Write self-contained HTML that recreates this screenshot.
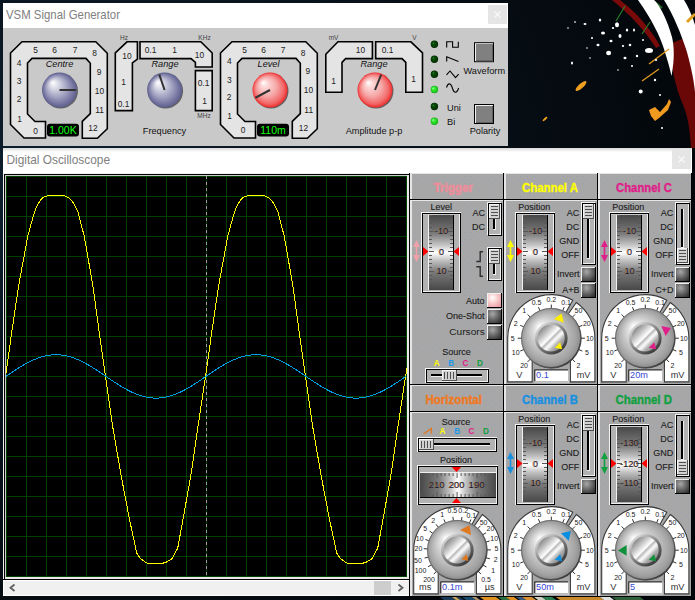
<!DOCTYPE html>
<html><head><meta charset="utf-8"><style>
html,body{margin:0;padding:0;background:#05090e;overflow:hidden}
svg{display:block;font-family:"Liberation Sans", sans-serif}
</style></head><body>
<svg width="695" height="600" viewBox="0 0 695 600">
<defs><radialGradient id="bgg" cx="0.1" cy="0.3" r="0.9">
<stop offset="0" stop-color="#0e2030"/><stop offset="0.5" stop-color="#08121b"/><stop offset="1" stop-color="#03070b"/></radialGradient><radialGradient id="kblue" cx="0.5" cy="0.5" r="0.5" fx="0.3" fy="0.28">
<stop offset="0" stop-color="#ffffff"/><stop offset="0.2" stop-color="#e2e2ec"/><stop offset="0.55" stop-color="#a9a9c6"/><stop offset="0.85" stop-color="#7676a2"/><stop offset="1" stop-color="#5e5e8c"/></radialGradient>
<radialGradient id="kred" cx="0.5" cy="0.5" r="0.5" fx="0.3" fy="0.28">
<stop offset="0" stop-color="#ffffff"/><stop offset="0.22" stop-color="#fcd4d4"/><stop offset="0.55" stop-color="#f6a8a8"/><stop offset="0.85" stop-color="#f26868"/><stop offset="1" stop-color="#ee2a2a"/></radialGradient><radialGradient id="ledoff" cx="0.5" cy="0.5" r="0.5" fx="0.3" fy="0.3"><stop offset="0" stop-color="#50e050"/><stop offset="0.22" stop-color="#0c500c"/><stop offset="0.8" stop-color="#033a03"/><stop offset="1" stop-color="#012001"/></radialGradient>
<radialGradient id="ledon" cx="0.5" cy="0.5" r="0.5" fx="0.3" fy="0.3"><stop offset="0" stop-color="#d0ffd0"/><stop offset="0.3" stop-color="#40f040"/><stop offset="0.85" stop-color="#18c818"/><stop offset="1" stop-color="#10a010"/></radialGradient><linearGradient id="tshadow" x1="0" y1="0" x2="0" y2="1"><stop offset="0" stop-color="#d8d8d8"/><stop offset="1" stop-color="#ffffff"/></linearGradient><clipPath id="scr"><rect x="6" y="176" width="401" height="401"/></clipPath><pattern id="tex" width="7" height="7" patternUnits="userSpaceOnUse">
<rect width="7" height="7" fill="#a7a7a7"/><rect x="2" y="1" width="1" height="1" fill="#98a2b0"/><rect x="5" y="4" width="1" height="1" fill="#9aa4b2"/><rect x="0" y="5" width="1" height="1" fill="#a0a8b4"/></pattern><linearGradient id="cylv" x1="0" y1="0" x2="0" y2="1">
<stop offset="0" stop-color="#484848"/><stop offset="0.25" stop-color="#7c7c7c"/><stop offset="0.4" stop-color="#c4c4c4"/><stop offset="0.5" stop-color="#ffffff"/><stop offset="0.6" stop-color="#c4c4c4"/><stop offset="0.75" stop-color="#7c7c7c"/><stop offset="1" stop-color="#484848"/></linearGradient>
<linearGradient id="cylh" x1="0" y1="0" x2="1" y2="0">
<stop offset="0" stop-color="#484848"/><stop offset="0.25" stop-color="#7c7c7c"/><stop offset="0.4" stop-color="#c4c4c4"/><stop offset="0.5" stop-color="#ffffff"/><stop offset="0.6" stop-color="#c4c4c4"/><stop offset="0.75" stop-color="#7c7c7c"/><stop offset="1" stop-color="#484848"/></linearGradient>
<radialGradient id="btnd" cx="0.35" cy="0.3" r="0.85"><stop offset="0" stop-color="#a8a8a8"/><stop offset="0.5" stop-color="#6a6a6a"/><stop offset="1" stop-color="#303030"/></radialGradient>
<radialGradient id="btnp" cx="0.35" cy="0.3" r="0.8"><stop offset="0" stop-color="#ffffff"/><stop offset="0.45" stop-color="#fad0d0"/><stop offset="1" stop-color="#e8a0a8"/></radialGradient><radialGradient id="knob" cx="0.5" cy="0.5" r="0.5" fx="0.3" fy="0.3">
<stop offset="0" stop-color="#ffffff"/><stop offset="0.3" stop-color="#dedede"/><stop offset="0.7" stop-color="#b8b8b8"/><stop offset="0.9" stop-color="#a2a2a2"/><stop offset="1" stop-color="#8e8e8e"/></radialGradient>
<linearGradient id="rim" x1="0.15" y1="0.1" x2="0.85" y2="0.9"><stop offset="0" stop-color="#9a9a9a"/><stop offset="0.55" stop-color="#707070"/><stop offset="1" stop-color="#303030"/></linearGradient>
<linearGradient id="ring" x1="0.2" y1="0.15" x2="0.8" y2="0.85"><stop offset="0" stop-color="#d0d0d0"/><stop offset="0.45" stop-color="#8a8a8a"/><stop offset="1" stop-color="#404040"/></linearGradient>
<linearGradient id="cap" x1="0.15" y1="0.15" x2="0.85" y2="0.85">
<stop offset="0" stop-color="#8c8c8c"/><stop offset="0.2" stop-color="#bcbcbc"/><stop offset="0.4" stop-color="#f0f0f0"/><stop offset="0.46" stop-color="#ffffff"/><stop offset="0.53" stop-color="#b8b8b8"/><stop offset="0.6" stop-color="#e8e8e8"/><stop offset="0.66" stop-color="#fafafa"/><stop offset="0.82" stop-color="#b0b0b0"/><stop offset="1" stop-color="#8a8a8a"/></linearGradient></defs>
<rect x="0" y="0" width="695" height="600" fill="url(#bgg)"/>
<g>
<path d="M612,0 L620,0 C636,12 650,28 660,46 L656,48 C646,32 630,14 612,0 Z" fill="#7a0a0a"/>
<path d="M669,44 L690,36 L695,40 L695,148 L691,148 C690,128 687,112 681,100 C676,88 671,66 669,44 Z" fill="#6a0808"/>
<path d="M616,21 L625,6" stroke="#2a7a2a" stroke-width="1.2"/><path d="M642,34 L650,22" stroke="#2a7a2a" stroke-width="1.2"/><path d="M655,2 L662,8" stroke="#2a6a2a" stroke-width="2"/>
<path d="M638,0 L654,0 C660,5 668,22 672,37 C674,46 675,58 671.5,76 C669,64 666,56 664,49 C660,36 652,20 638,0 Z" fill="#ffffff"/>
<path d="M664,0 L684,0 C689,8 693,18 695,25 L695,92 C694,80 690,62 686,49 C681,34 674,16 664,0 Z" fill="#ffffff"/>
<path d="M642,81 L659,69" stroke="#e09a20" stroke-width="1.3"/><path d="M649,64 L669,49" stroke="#e09a20" stroke-width="1.3"/><path d="M687,22 L695,14" stroke="#e0a020" stroke-width="3"/>
<ellipse cx="581" cy="86" rx="7" ry="2.3" transform="rotate(-42 581 86)" fill="#f0a020"/>
<ellipse cx="545" cy="119" rx="3" ry="1.1" transform="rotate(-40 545 119)" fill="#f0a020"/>
<path d="M649,110 L655,107 L660,112 L667,104 L669,99 L671,102 L668,110 L659,118 L655,121 L651,116 Z" fill="#f09a20"/>
<ellipse cx="649" cy="50.6" rx="4" ry="2.5" fill="#fff"/><ellipse cx="608.6" cy="53" rx="2.5" ry="2.2" fill="#fff"/><ellipse cx="617" cy="24.7" rx="2" ry="2.5" fill="#fff"/><ellipse cx="640.7" cy="91.4" rx="2" ry="2" fill="#fff"/><ellipse cx="603" cy="33" rx="2" ry="1.5" fill="#fff"/><ellipse cx="611" cy="41" rx="1.5" ry="1.2" fill="#fff"/><ellipse cx="620" cy="36" rx="1.5" ry="2" fill="#fff"/><ellipse cx="627" cy="30" rx="1.2" ry="1.5" fill="#fff"/><ellipse cx="630" cy="45" rx="1.3" ry="1.2" fill="#fff"/><ellipse cx="598" cy="45" rx="1.5" ry="1.2" fill="#fff"/><ellipse cx="613" cy="28" rx="1.2" ry="1" fill="#fff"/><ellipse cx="634" cy="30" rx="1" ry="1.5" fill="#fff"/><ellipse cx="623" cy="46" rx="1.2" ry="1" fill="#fff"/><ellipse cx="637" cy="56" rx="1.2" ry="1.2" fill="#fff"/><ellipse cx="625" cy="58" rx="1.5" ry="1.3" fill="#fff"/><ellipse cx="600" cy="20" rx="1.2" ry="1.5" fill="#fff"/><ellipse cx="585" cy="24" rx="1.5" ry="1" fill="#fff"/><ellipse cx="575" cy="22" rx="1" ry="0.8" fill="#fff"/><ellipse cx="568" cy="28" rx="0.8" ry="0.7" fill="#fff"/><ellipse cx="592" cy="38" rx="1" ry="1" fill="#fff"/><ellipse cx="587" cy="48" rx="0.8" ry="0.8" fill="#fff"/><ellipse cx="572" cy="63" rx="1" ry="1.5" fill="#fff"/><ellipse cx="632" cy="66" rx="1" ry="1" fill="#fff"/><ellipse cx="655" cy="80" rx="1.2" ry="1.2" fill="#fff"/><ellipse cx="660" cy="95" rx="1" ry="1" fill="#fff"/><ellipse cx="618" cy="70" rx="0.8" ry="0.8" fill="#fff"/><ellipse cx="590" cy="58" rx="0.8" ry="0.8" fill="#fff"/><ellipse cx="643" cy="40" rx="1" ry="1" fill="#fff"/><ellipse cx="656" cy="60" rx="1.2" ry="1" fill="#fff"/><ellipse cx="662" cy="128" rx="1" ry="1" fill="#fff"/>
</g>
<path d="M440,597 L460,597 L464,600 L444,600 Z" fill="#1a3a58"/>
<path d="M452,597 L456,597 L460,600 L456,600 Z" fill="#c8a050"/>
<path d="M462,597 L476,597 L480,600 L466,600 Z" fill="#1a4868"/>
<path d="M472,597 L476,597 L480,600 L476,600 Z" fill="#b09060"/>
<path d="M480,597 L496,597 L500,600 L484,600 Z" fill="#e09020"/>
<path d="M498,597 L506,597 L510,600 L502,600 Z" fill="#2a7040"/>
<path d="M506,597 L514,597 L518,600 L510,600 Z" fill="#e09020"/>
<path d="M516,597 L522,597 L526,600 L520,600 Z" fill="#3a5a80"/>
<path d="M522,597 L532,597 L536,600 L526,600 Z" fill="#d89030"/>
<path d="M534,597 L542,597 L546,600 L538,600 Z" fill="#d0d0c0"/>
<path d="M542,597 L552,597 L556,600 L546,600 Z" fill="#2a8050"/>
<path d="M556,597 L600,597 L604,600 L560,600 Z" fill="#c88a28"/>
<path d="M600,597 L610,597 L614,600 L604,600 Z" fill="#e0e0e0"/>
<path d="M612,597 L640,597 L644,600 L616,600 Z" fill="#30603a"/>
<rect x="3" y="3" width="505" height="25" fill="#ffffff"/>
<rect x="3" y="28" width="505" height="118" fill="#c9c9c9"/>
<text x="6" y="19" font-size="12.2" fill="#808080" textLength="114" lengthAdjust="spacingAndGlyphs">VSM Signal Generator</text>
<rect x="488" y="5" width="19" height="19" fill="#e5e5e5"/>
<path d="M494.5,11.5 L500.5,17.5 M500.5,11.5 L494.5,17.5" stroke="#f8f8f8" stroke-width="1.2"/>
<path d="M45.5,138.0 L24.0,138.0 L10.5,124.5 L10.5,53.0 L22.0,41.7 L95.8,41.7 L107.3,53.3 L107.3,128.7 L97.4,138.3 L82.3,138.3 L82.3,121.4 L90.3,113.6 L90.3,63.3 L86.0,58.4 L32.0,58.4 L27.5,63.0 L27.5,114.0 L35.0,121.5 L45.5,121.5 Z" fill="#e4e4e4" stroke="#000" stroke-width="1.6" stroke-linejoin="miter"/>
<path d="M255.5,138.0 L234.0,138.0 L220.5,124.5 L220.5,53.0 L232.0,41.7 L305.8,41.7 L317.3,53.3 L317.3,128.7 L307.4,138.3 L292.3,138.3 L292.3,121.4 L300.3,113.6 L300.3,63.3 L296.0,58.4 L242.0,58.4 L237.5,63.0 L237.5,114.0 L245.0,121.5 L255.5,121.5 Z" fill="#e4e4e4" stroke="#000" stroke-width="1.6" stroke-linejoin="miter"/>
<path d="M127,41.8 L137.4,41.8 L137.4,59 L132.4,63 L132.4,110.6 L115.3,110.6 L115.3,52.9 Z" fill="#e4e4e4" stroke="#000" stroke-width="1.6" stroke-linejoin="miter"/>
<path d="M140,41.8 L200.8,41.8 L212.2,53 L212.2,67 L195.4,67 L195.4,62.4 L191,58.6 L140,58.6 Z" fill="#e4e4e4" stroke="#000" stroke-width="1.6" stroke-linejoin="miter"/>
<path d="M195.4,70.6 L212.2,70.6 L212.2,110.6 L195.4,110.6 Z" fill="#e4e4e4" stroke="#000" stroke-width="1.6" stroke-linejoin="miter"/>
<path d="M338,41.8 L372.4,41.8 L372.4,58.6 L345.6,58.6 L342,62.4 L342,92.2 L325.8,92.2 L325.8,54.3 Z" fill="#e4e4e4" stroke="#000" stroke-width="1.6" stroke-linejoin="miter"/>
<path d="M375.7,41.8 L410.9,41.8 L422.5,52.9 L422.5,92.2 L405.8,92.2 L405.8,62.4 L402,58.6 L375.7,58.6 Z" fill="#e4e4e4" stroke="#000" stroke-width="1.6" stroke-linejoin="miter"/>
<text x="35.5" y="52.5144" font-size="8.4" fill="#222" text-anchor="middle">5</text>
<text x="244.5" y="52.5144" font-size="8.4" fill="#222" text-anchor="middle">5</text>
<text x="54.5" y="52.8144" font-size="8.4" fill="#222" text-anchor="middle">6</text>
<text x="263.5" y="52.8144" font-size="8.4" fill="#222" text-anchor="middle">6</text>
<text x="75" y="52.8144" font-size="8.4" fill="#222" text-anchor="middle">7</text>
<text x="283.2" y="52.8144" font-size="8.4" fill="#222" text-anchor="middle">7</text>
<text x="94.5" y="56.0144" font-size="8.4" fill="#222" text-anchor="middle">8</text>
<text x="303.0" y="55.5144" font-size="8.4" fill="#222" text-anchor="middle">8</text>
<text x="99" y="75.0144" font-size="8.4" fill="#222" text-anchor="middle">9</text>
<text x="307.8" y="73.5144" font-size="8.4" fill="#222" text-anchor="middle">9</text>
<text x="99.5" y="94.0144" font-size="8.4" fill="#222" text-anchor="middle">10</text>
<text x="308.4" y="92.5144" font-size="8.4" fill="#222" text-anchor="middle">10</text>
<text x="99.5" y="113.0144" font-size="8.4" fill="#222" text-anchor="middle">11</text>
<text x="308.7" y="112.5144" font-size="8.4" fill="#222" text-anchor="middle">11</text>
<text x="93" y="130.5144" font-size="8.4" fill="#222" text-anchor="middle">12</text>
<text x="303.4" y="131.0144" font-size="8.4" fill="#222" text-anchor="middle">12</text>
<text x="19" y="66.0144" font-size="8.4" fill="#222" text-anchor="middle">4</text>
<text x="229.3" y="64.0144" font-size="8.4" fill="#222" text-anchor="middle">4</text>
<text x="19" y="84.0144" font-size="8.4" fill="#222" text-anchor="middle">3</text>
<text x="229.3" y="82.5144" font-size="8.4" fill="#222" text-anchor="middle">3</text>
<text x="19" y="101.5144" font-size="8.4" fill="#222" text-anchor="middle">2</text>
<text x="229" y="100.31439999999999" font-size="8.4" fill="#222" text-anchor="middle">2</text>
<text x="19.5" y="122.0144" font-size="8.4" fill="#222" text-anchor="middle">1</text>
<text x="229.5" y="119.0144" font-size="8.4" fill="#222" text-anchor="middle">1</text>
<text x="35.5" y="134.0144" font-size="8.4" fill="#222" text-anchor="middle">0</text>
<text x="243.2" y="133.4144" font-size="8.4" fill="#222" text-anchor="middle">0</text>
<text x="127" y="59.0144" font-size="8.4" fill="#222" text-anchor="middle">10</text>
<text x="123.5" y="85.0144" font-size="8.4" fill="#222" text-anchor="middle">1</text>
<text x="123.5" y="107.0144" font-size="8.4" fill="#222" text-anchor="middle">0.1</text>
<text x="150.5" y="53.0144" font-size="8.4" fill="#222" text-anchor="middle">0.1</text>
<text x="174.5" y="53.0144" font-size="8.4" fill="#222" text-anchor="middle">1</text>
<text x="199.5" y="58.0144" font-size="8.4" fill="#222" text-anchor="middle">10</text>
<text x="203.5" y="86.0144" font-size="8.4" fill="#222" text-anchor="middle">0.1</text>
<text x="204.5" y="104.0144" font-size="8.4" fill="#222" text-anchor="middle">1</text>
<text x="124" y="39.7" font-size="6.5" fill="#444" text-anchor="middle">Hz</text>
<text x="204.5" y="39.9" font-size="6.5" fill="#444" text-anchor="middle">KHz</text>
<text x="204" y="117.5" font-size="6.5" fill="#444" text-anchor="middle">MHz</text>
<text x="360.5" y="53.0144" font-size="8.4" fill="#222" text-anchor="middle">10</text>
<text x="333.5" y="84.0144" font-size="8.4" fill="#222" text-anchor="middle">1</text>
<text x="387.5" y="53.0144" font-size="8.4" fill="#222" text-anchor="middle">0.1</text>
<text x="413.5" y="82.0144" font-size="8.4" fill="#222" text-anchor="middle">1</text>
<text x="333.5" y="40" font-size="6.5" fill="#444" text-anchor="middle">mV</text>
<text x="414.3" y="40.3" font-size="6.5" fill="#444" text-anchor="middle">V</text>
<text x="59.5" y="67.3" font-size="9.2" fill="#111" text-anchor="middle" font-style="italic">Centre</text>
<text x="165" y="67.3" font-size="9.2" fill="#111" text-anchor="middle" font-style="italic">Range</text>
<text x="268.5" y="67.3" font-size="9.2" fill="#111" text-anchor="middle" font-style="italic">Level</text>
<text x="374" y="67.3" font-size="9.2" fill="#111" text-anchor="middle" font-style="italic">Range</text>
<text x="164.5" y="134" font-size="9.2" fill="#111" text-anchor="middle">Frequency</text>
<text x="374" y="134" font-size="9.2" fill="#111" text-anchor="middle">Amplitude p-p</text>
<circle cx="60.5" cy="91" r="17.5" fill="#404040" opacity="0.75"/>
<circle cx="59.5" cy="90" r="17.5" fill="url(#kblue)"/>
<line x1="59.5" y1="90" x2="76.00" y2="90.00" stroke="#333" stroke-width="2"/>
<circle cx="165.6" cy="91" r="17.5" fill="#404040" opacity="0.75"/>
<circle cx="164.6" cy="90" r="17.5" fill="url(#kblue)"/>
<line x1="164.6" y1="90" x2="159.23" y2="74.40" stroke="#333" stroke-width="2"/>
<circle cx="271" cy="91" r="17.5" fill="#404040" opacity="0.75"/>
<circle cx="270" cy="90" r="17.5" fill="url(#kred)"/>
<line x1="270" y1="90" x2="255.43" y2="97.75" stroke="#333" stroke-width="2"/>
<circle cx="376" cy="91" r="17.5" fill="#404040" opacity="0.75"/>
<circle cx="375" cy="90" r="17.5" fill="url(#kred)"/>
<line x1="375" y1="90" x2="381.18" y2="74.70" stroke="#333" stroke-width="2"/>
<rect x="47" y="123.7" width="32" height="12.8" rx="3" fill="#000"/>
<text x="63.0" y="134.2" font-size="10.5" fill="#10ff10" text-anchor="middle">1.00K</text>
<rect x="257" y="123.7" width="32" height="12.8" rx="3" fill="#000"/>
<text x="273.0" y="134.2" font-size="10.5" fill="#10ff10" text-anchor="middle">110m</text>
<circle cx="434.4" cy="44.3" r="3.7" fill="url(#ledoff)"/>
<circle cx="434.4" cy="59.2" r="3.7" fill="url(#ledoff)"/>
<circle cx="434.4" cy="74.2" r="3.7" fill="url(#ledoff)"/>
<circle cx="434.4" cy="89.5" r="3.7" fill="url(#ledon)"/>
<circle cx="434.4" cy="106.5" r="3.7" fill="url(#ledoff)"/>
<circle cx="434.4" cy="121.2" r="3.7" fill="url(#ledon)"/>
<path d="M446.7,47.5 L446.7,41.7 L452.6,41.7 L452.6,47.3 L458.3,47.3 L458.3,41.7" fill="none" stroke="#000" stroke-width="1.1"/>
<path d="M446.7,61.5 L446.7,56.7 L458.5,61.5" fill="none" stroke="#000" stroke-width="1.1"/>
<path d="M446.5,74.8 L450,71 L455.5,77.6 L458.6,74.2" fill="none" stroke="#000" stroke-width="1.1"/>
<path d="M446.5,87.5 C448,82.5 451,82.5 452.5,88.5 C454,93.5 457,93.5 458.6,88" fill="none" stroke="#000" stroke-width="1.1"/>
<text x="447" y="110.5" font-size="9.2" fill="#111">Uni</text>
<text x="447" y="124.5" font-size="9.2" fill="#111">Bi</text>
<rect x="474" y="42.2" width="20" height="20" fill="#000"/>
<rect x="475" y="43.2" width="18" height="18" fill="#f0f0f0"/>
<rect x="476" y="44.2" width="17" height="17" fill="#606060"/>
<rect x="476" y="44.2" width="16" height="16" fill="#808080"/>
<rect x="474" y="104" width="20" height="20" fill="#000"/>
<rect x="475" y="105" width="18" height="18" fill="#f0f0f0"/>
<rect x="476" y="106" width="17" height="17" fill="#606060"/>
<rect x="476" y="106" width="16" height="16" fill="#808080"/>
<text x="484.3" y="74" font-size="9.2" fill="#111" text-anchor="middle">Waveform</text>
<text x="485" y="133.8" font-size="9.2" fill="#111" text-anchor="middle">Polarity</text>
<rect x="3" y="148" width="689" height="25" fill="#ffffff"/>
<rect x="3" y="148" width="689" height="4" fill="url(#tshadow)"/>
<text x="6.5" y="163.8" font-size="12.2" fill="#808080" textLength="103.5" lengthAdjust="spacingAndGlyphs">Digital Oscilloscope</text>
<rect x="672" y="150" width="19" height="19" fill="#e5e5e5"/>
<path d="M678.5,156.5 L684.5,162.5 M684.5,156.5 L678.5,162.5" stroke="#f8f8f8" stroke-width="1.2"/>
<rect x="3" y="173" width="408" height="423" fill="#f0f0f0"/>
<rect x="4" y="174" width="406" height="406" fill="#000"/>
<rect x="5" y="175" width="404" height="404" fill="#c8c8c8"/>
<rect x="6" y="176" width="401" height="401" fill="#000"/>
<rect x="407" y="175" width="2" height="404" fill="#e8e8e8"/>
<rect x="5" y="577" width="404" height="2" fill="#e8e8e8"/>
<rect x="6" y="176" width="1" height="401" fill="#004000"/><rect x="6" y="176" width="401" height="1" fill="#004000"/><rect x="26" y="176" width="1" height="401" fill="#004000"/><rect x="6" y="196" width="401" height="1" fill="#004000"/><rect x="46" y="176" width="1" height="401" fill="#004000"/><rect x="6" y="216" width="401" height="1" fill="#004000"/><rect x="66" y="176" width="1" height="401" fill="#004000"/><rect x="6" y="236" width="401" height="1" fill="#004000"/><rect x="86" y="176" width="1" height="401" fill="#004000"/><rect x="6" y="256" width="401" height="1" fill="#004000"/><rect x="106" y="176" width="1" height="401" fill="#004000"/><rect x="6" y="276" width="401" height="1" fill="#004000"/><rect x="126" y="176" width="1" height="401" fill="#004000"/><rect x="6" y="296" width="401" height="1" fill="#004000"/><rect x="146" y="176" width="1" height="401" fill="#004000"/><rect x="6" y="316" width="401" height="1" fill="#004000"/><rect x="166" y="176" width="1" height="401" fill="#004000"/><rect x="6" y="336" width="401" height="1" fill="#004000"/><rect x="186" y="176" width="1" height="401" fill="#004000"/><rect x="6" y="356" width="401" height="1" fill="#004000"/><rect x="206" y="176" width="1" height="401" fill="#004000"/><rect x="6" y="376" width="401" height="1" fill="#004000"/><rect x="226" y="176" width="1" height="401" fill="#004000"/><rect x="6" y="396" width="401" height="1" fill="#004000"/><rect x="246" y="176" width="1" height="401" fill="#004000"/><rect x="6" y="416" width="401" height="1" fill="#004000"/><rect x="266" y="176" width="1" height="401" fill="#004000"/><rect x="6" y="436" width="401" height="1" fill="#004000"/><rect x="286" y="176" width="1" height="401" fill="#004000"/><rect x="6" y="456" width="401" height="1" fill="#004000"/><rect x="306" y="176" width="1" height="401" fill="#004000"/><rect x="6" y="476" width="401" height="1" fill="#004000"/><rect x="326" y="176" width="1" height="401" fill="#004000"/><rect x="6" y="496" width="401" height="1" fill="#004000"/><rect x="346" y="176" width="1" height="401" fill="#004000"/><rect x="6" y="516" width="401" height="1" fill="#004000"/><rect x="366" y="176" width="1" height="401" fill="#004000"/><rect x="6" y="536" width="401" height="1" fill="#004000"/><rect x="386" y="176" width="1" height="401" fill="#004000"/><rect x="6" y="556" width="401" height="1" fill="#004000"/><rect x="406" y="176" width="1" height="401" fill="#004000"/><rect x="6" y="576" width="401" height="1" fill="#004000"/>
<rect x="206" y="176" width="1" height="3" fill="#a0a0a0"/><rect x="206" y="182" width="1" height="3" fill="#a0a0a0"/><rect x="206" y="188" width="1" height="3" fill="#a0a0a0"/><rect x="206" y="194" width="1" height="3" fill="#a0a0a0"/><rect x="206" y="200" width="1" height="3" fill="#a0a0a0"/><rect x="206" y="206" width="1" height="3" fill="#a0a0a0"/><rect x="206" y="212" width="1" height="3" fill="#a0a0a0"/><rect x="206" y="218" width="1" height="3" fill="#a0a0a0"/><rect x="206" y="224" width="1" height="3" fill="#a0a0a0"/><rect x="206" y="230" width="1" height="3" fill="#a0a0a0"/><rect x="206" y="236" width="1" height="3" fill="#a0a0a0"/><rect x="206" y="242" width="1" height="3" fill="#a0a0a0"/><rect x="206" y="248" width="1" height="3" fill="#a0a0a0"/><rect x="206" y="254" width="1" height="3" fill="#a0a0a0"/><rect x="206" y="260" width="1" height="3" fill="#a0a0a0"/><rect x="206" y="266" width="1" height="3" fill="#a0a0a0"/><rect x="206" y="272" width="1" height="3" fill="#a0a0a0"/><rect x="206" y="278" width="1" height="3" fill="#a0a0a0"/><rect x="206" y="284" width="1" height="3" fill="#a0a0a0"/><rect x="206" y="290" width="1" height="3" fill="#a0a0a0"/><rect x="206" y="296" width="1" height="3" fill="#a0a0a0"/><rect x="206" y="302" width="1" height="3" fill="#a0a0a0"/><rect x="206" y="308" width="1" height="3" fill="#a0a0a0"/><rect x="206" y="314" width="1" height="3" fill="#a0a0a0"/><rect x="206" y="320" width="1" height="3" fill="#a0a0a0"/><rect x="206" y="326" width="1" height="3" fill="#a0a0a0"/><rect x="206" y="332" width="1" height="3" fill="#a0a0a0"/><rect x="206" y="338" width="1" height="3" fill="#a0a0a0"/><rect x="206" y="344" width="1" height="3" fill="#a0a0a0"/><rect x="206" y="350" width="1" height="3" fill="#a0a0a0"/><rect x="206" y="356" width="1" height="3" fill="#a0a0a0"/><rect x="206" y="362" width="1" height="3" fill="#a0a0a0"/><rect x="206" y="368" width="1" height="3" fill="#a0a0a0"/><rect x="206" y="374" width="1" height="3" fill="#a0a0a0"/><rect x="206" y="380" width="1" height="3" fill="#a0a0a0"/><rect x="206" y="386" width="1" height="3" fill="#a0a0a0"/><rect x="206" y="392" width="1" height="3" fill="#a0a0a0"/><rect x="206" y="398" width="1" height="3" fill="#a0a0a0"/><rect x="206" y="404" width="1" height="3" fill="#a0a0a0"/><rect x="206" y="410" width="1" height="3" fill="#a0a0a0"/><rect x="206" y="416" width="1" height="3" fill="#a0a0a0"/><rect x="206" y="422" width="1" height="3" fill="#a0a0a0"/><rect x="206" y="428" width="1" height="3" fill="#a0a0a0"/><rect x="206" y="434" width="1" height="3" fill="#a0a0a0"/><rect x="206" y="440" width="1" height="3" fill="#a0a0a0"/><rect x="206" y="446" width="1" height="3" fill="#a0a0a0"/><rect x="206" y="452" width="1" height="3" fill="#a0a0a0"/><rect x="206" y="458" width="1" height="3" fill="#a0a0a0"/><rect x="206" y="464" width="1" height="3" fill="#a0a0a0"/><rect x="206" y="470" width="1" height="3" fill="#a0a0a0"/><rect x="206" y="476" width="1" height="3" fill="#a0a0a0"/><rect x="206" y="482" width="1" height="3" fill="#a0a0a0"/><rect x="206" y="488" width="1" height="3" fill="#a0a0a0"/><rect x="206" y="494" width="1" height="3" fill="#a0a0a0"/><rect x="206" y="500" width="1" height="3" fill="#a0a0a0"/><rect x="206" y="506" width="1" height="3" fill="#a0a0a0"/><rect x="206" y="512" width="1" height="3" fill="#a0a0a0"/><rect x="206" y="518" width="1" height="3" fill="#a0a0a0"/><rect x="206" y="524" width="1" height="3" fill="#a0a0a0"/><rect x="206" y="530" width="1" height="3" fill="#a0a0a0"/><rect x="206" y="536" width="1" height="3" fill="#a0a0a0"/><rect x="206" y="542" width="1" height="3" fill="#a0a0a0"/><rect x="206" y="548" width="1" height="3" fill="#a0a0a0"/><rect x="206" y="554" width="1" height="3" fill="#a0a0a0"/><rect x="206" y="560" width="1" height="3" fill="#a0a0a0"/><rect x="206" y="566" width="1" height="3" fill="#a0a0a0"/><rect x="206" y="572" width="1" height="3" fill="#a0a0a0"/>
<polyline points="5.50,376.50 12.00,330.50 18.50,286.50 27.70,236.50 32.70,218.20 36.80,206.00 40.50,200.00 44.00,196.80 48.00,195.80 64.30,195.80 68.50,197.50 72.50,201.50 77.70,211.00 84.30,236.50 92.70,284.50 99.00,330.50 105.50,376.50 113.00,428.50 121.30,476.50 129.50,519.50 136.80,553.20 140.20,558.20 146.00,562.80 150.20,563.80 159.30,563.80 165.20,562.70 171.80,559.00 177.70,548.20 183.50,516.50 190.70,476.50 198.00,426.50 205.50,376.50 212.00,330.50 218.50,286.50 227.70,236.50 232.70,218.20 236.80,206.00 240.50,200.00 244.00,196.80 248.00,195.80 264.30,195.80 268.50,197.50 272.50,201.50 277.70,211.00 284.30,236.50 292.70,284.50 299.00,330.50 305.50,376.50 313.00,428.50 321.30,476.50 329.50,519.50 336.80,553.20 340.20,558.20 346.00,562.80 350.20,563.80 359.30,563.80 365.20,562.70 371.80,559.00 377.70,548.20 383.50,516.50 390.70,476.50 398.00,426.50 405.50,376.50 412.00,340.00" fill="none" stroke="#ffff00" stroke-width="1" shape-rendering="crispEdges" clip-path="url(#scr)"/>
<polyline points="6.00,376.40 8.00,375.04 10.00,373.68 12.00,372.33 14.00,371.00 16.00,369.69 18.00,368.41 20.00,367.16 22.00,365.95 24.00,364.77 26.00,363.65 28.00,362.57 30.00,361.55 32.00,360.58 34.00,359.68 36.00,358.84 38.00,358.08 40.00,357.38 42.00,356.77 44.00,356.22 46.00,355.76 48.00,355.38 50.00,355.08 52.00,354.87 54.00,354.74 56.00,354.70 58.00,354.74 60.00,354.87 62.00,355.08 64.00,355.38 66.00,355.76 68.00,356.22 70.00,356.77 72.00,357.38 74.00,358.08 76.00,358.84 78.00,359.68 80.00,360.58 82.00,361.55 84.00,362.57 86.00,363.65 88.00,364.77 90.00,365.95 92.00,367.16 94.00,368.41 96.00,369.69 98.00,371.00 100.00,372.33 102.00,373.68 104.00,375.04 106.00,376.40 108.00,377.76 110.00,379.12 112.00,380.47 114.00,381.80 116.00,383.11 118.00,384.39 120.00,385.64 122.00,386.85 124.00,388.03 126.00,389.15 128.00,390.23 130.00,391.25 132.00,392.22 134.00,393.12 136.00,393.96 138.00,394.72 140.00,395.42 142.00,396.03 144.00,396.58 146.00,397.04 148.00,397.42 150.00,397.72 152.00,397.93 154.00,398.06 156.00,398.10 158.00,398.06 160.00,397.93 162.00,397.72 164.00,397.42 166.00,397.04 168.00,396.58 170.00,396.03 172.00,395.42 174.00,394.72 176.00,393.96 178.00,393.12 180.00,392.22 182.00,391.25 184.00,390.23 186.00,389.15 188.00,388.03 190.00,386.85 192.00,385.64 194.00,384.39 196.00,383.11 198.00,381.80 200.00,380.47 202.00,379.12 204.00,377.76 206.00,376.40 208.00,375.04 210.00,373.68 212.00,372.33 214.00,371.00 216.00,369.69 218.00,368.41 220.00,367.16 222.00,365.95 224.00,364.77 226.00,363.65 228.00,362.57 230.00,361.55 232.00,360.58 234.00,359.68 236.00,358.84 238.00,358.08 240.00,357.38 242.00,356.77 244.00,356.22 246.00,355.76 248.00,355.38 250.00,355.08 252.00,354.87 254.00,354.74 256.00,354.70 258.00,354.74 260.00,354.87 262.00,355.08 264.00,355.38 266.00,355.76 268.00,356.22 270.00,356.77 272.00,357.38 274.00,358.08 276.00,358.84 278.00,359.68 280.00,360.58 282.00,361.55 284.00,362.57 286.00,363.65 288.00,364.77 290.00,365.95 292.00,367.16 294.00,368.41 296.00,369.69 298.00,371.00 300.00,372.33 302.00,373.68 304.00,375.04 306.00,376.40 308.00,377.76 310.00,379.12 312.00,380.47 314.00,381.80 316.00,383.11 318.00,384.39 320.00,385.64 322.00,386.85 324.00,388.03 326.00,389.15 328.00,390.23 330.00,391.25 332.00,392.22 334.00,393.12 336.00,393.96 338.00,394.72 340.00,395.42 342.00,396.03 344.00,396.58 346.00,397.04 348.00,397.42 350.00,397.72 352.00,397.93 354.00,398.06 356.00,398.10 358.00,398.06 360.00,397.93 362.00,397.72 364.00,397.42 366.00,397.04 368.00,396.58 370.00,396.03 372.00,395.42 374.00,394.72 376.00,393.96 378.00,393.12 380.00,392.22 382.00,391.25 384.00,390.23 386.00,389.15 388.00,388.03 390.00,386.85 392.00,385.64 394.00,384.39 396.00,383.11 398.00,381.80 400.00,380.47 402.00,379.12 404.00,377.76 406.00,376.40" fill="none" stroke="#009ee0" stroke-width="1" shape-rendering="crispEdges" clip-path="url(#scr)"/>
<rect x="3" y="579" width="407" height="1" fill="#000"/>
<rect x="3" y="580" width="407" height="16" fill="#ffffff"/>
<rect x="4" y="581" width="405" height="14" fill="#f0f0f0"/>
<rect x="374" y="581" width="17" height="14" fill="#cdcdcd"/>
<path d="M14.5,584.5 L10.5,587.8 L14.5,591" fill="none" stroke="#606060" stroke-width="1.8"/>
<path d="M398.5,584.5 L402.5,587.8 L398.5,591" fill="none" stroke="#606060" stroke-width="1.8"/>
<rect x="409" y="173" width="283" height="424" fill="#000"/>
<rect x="410" y="173" width="93" height="26" fill="#e6e6e6"/>
<rect x="412" y="174" width="91" height="25" fill="url(#tex)"/>
<rect x="503" y="173" width="1" height="27" fill="#000"/>
<rect x="410" y="199" width="94" height="1" fill="#000"/>
<rect x="410" y="200" width="93" height="184" fill="#e6e6e6"/>
<rect x="412" y="201" width="91" height="183" fill="url(#tex)"/>
<rect x="503" y="200" width="1" height="185" fill="#000"/>
<rect x="410" y="384" width="94" height="1" fill="#000"/>
<rect x="410" y="385" width="93" height="26" fill="#e6e6e6"/>
<rect x="412" y="386" width="91" height="25" fill="url(#tex)"/>
<rect x="503" y="385" width="1" height="27" fill="#000"/>
<rect x="410" y="411" width="94" height="1" fill="#000"/>
<rect x="410" y="412" width="93" height="184" fill="#e6e6e6"/>
<rect x="412" y="413" width="91" height="183" fill="url(#tex)"/>
<rect x="503" y="412" width="1" height="185" fill="#000"/>
<rect x="410" y="596" width="94" height="1" fill="#000"/>
<rect x="504" y="173" width="93" height="26" fill="#e6e6e6"/>
<rect x="506" y="174" width="91" height="25" fill="url(#tex)"/>
<rect x="597" y="173" width="1" height="27" fill="#000"/>
<rect x="504" y="199" width="94" height="1" fill="#000"/>
<rect x="504" y="200" width="93" height="184" fill="#e6e6e6"/>
<rect x="506" y="201" width="91" height="183" fill="url(#tex)"/>
<rect x="597" y="200" width="1" height="185" fill="#000"/>
<rect x="504" y="384" width="94" height="1" fill="#000"/>
<rect x="504" y="385" width="93" height="26" fill="#e6e6e6"/>
<rect x="506" y="386" width="91" height="25" fill="url(#tex)"/>
<rect x="597" y="385" width="1" height="27" fill="#000"/>
<rect x="504" y="411" width="94" height="1" fill="#000"/>
<rect x="504" y="412" width="93" height="184" fill="#e6e6e6"/>
<rect x="506" y="413" width="91" height="183" fill="url(#tex)"/>
<rect x="597" y="412" width="1" height="185" fill="#000"/>
<rect x="504" y="596" width="94" height="1" fill="#000"/>
<rect x="598" y="173" width="93" height="26" fill="#e6e6e6"/>
<rect x="600" y="174" width="91" height="25" fill="url(#tex)"/>
<rect x="691" y="173" width="1" height="27" fill="#000"/>
<rect x="598" y="199" width="94" height="1" fill="#000"/>
<rect x="598" y="200" width="93" height="184" fill="#e6e6e6"/>
<rect x="600" y="201" width="91" height="183" fill="url(#tex)"/>
<rect x="691" y="200" width="1" height="185" fill="#000"/>
<rect x="598" y="384" width="94" height="1" fill="#000"/>
<rect x="598" y="385" width="93" height="26" fill="#e6e6e6"/>
<rect x="600" y="386" width="91" height="25" fill="url(#tex)"/>
<rect x="691" y="385" width="1" height="27" fill="#000"/>
<rect x="598" y="411" width="94" height="1" fill="#000"/>
<rect x="598" y="412" width="93" height="184" fill="#e6e6e6"/>
<rect x="600" y="413" width="91" height="183" fill="url(#tex)"/>
<rect x="691" y="412" width="1" height="185" fill="#000"/>
<rect x="598" y="596" width="94" height="1" fill="#000"/>
<text x="453.2" y="192.4" font-size="12" fill="#f08c9a" text-anchor="middle" font-weight="bold" textLength="39.6" lengthAdjust="spacingAndGlyphs" stroke="#f08c9a" stroke-width="0.35">Trigger</text>
<text x="550" y="191.6" font-size="12" fill="#ffff00" text-anchor="middle" font-weight="bold" textLength="56" lengthAdjust="spacingAndGlyphs" stroke="#ffff00" stroke-width="0.35">Channel A</text>
<text x="644" y="191.6" font-size="12" fill="#e0208a" text-anchor="middle" font-weight="bold" textLength="56" lengthAdjust="spacingAndGlyphs" stroke="#e0208a" stroke-width="0.35">Channel C</text>
<text x="453.7" y="403.9" font-size="12" fill="#f07820" text-anchor="middle" font-weight="bold" textLength="56.5" lengthAdjust="spacingAndGlyphs" stroke="#f07820" stroke-width="0.35">Horizontal</text>
<text x="550" y="403.9" font-size="12" fill="#1890e0" text-anchor="middle" font-weight="bold" textLength="56" lengthAdjust="spacingAndGlyphs" stroke="#1890e0" stroke-width="0.35">Channel B</text>
<text x="643.7" y="404" font-size="12" fill="#10a040" text-anchor="middle" font-weight="bold" textLength="56.5" lengthAdjust="spacingAndGlyphs" stroke="#10a040" stroke-width="0.35">Channel D</text>
<text x="441.3" y="209.7" font-size="9" fill="#1c1c1c" text-anchor="middle" stroke="#1c1c1c" stroke-width="0.12">Level</text>
<rect x="421" y="212" width="40" height="1" fill="#f4f4f4"/>
<rect x="421" y="212" width="1" height="81" fill="#f4f4f4"/>
<rect x="422" y="213" width="39" height="80" fill="#000"/>
<rect x="423" y="214" width="37" height="78" fill="#b2b2b2"/>
<rect x="423" y="214" width="37" height="1" fill="#c8c8c8"/>
<rect x="459" y="214" width="1" height="78" fill="#f0f0f0"/>
<rect x="423" y="291" width="37" height="1" fill="#f0f0f0"/>
<rect x="428" y="215" width="1" height="75" fill="#f0f0f0"/>
<rect x="429" y="215" width="24" height="75" fill="url(#cylv)"/>
<rect x="453" y="215" width="1" height="75" fill="#000"/>
<rect x="429" y="215" width="3" height="1" fill="#585858"/><rect x="450" y="215" width="3" height="1" fill="#585858"/><rect x="429" y="219" width="3" height="1" fill="#585858"/><rect x="450" y="219" width="3" height="1" fill="#585858"/><rect x="429" y="223" width="3" height="1" fill="#585858"/><rect x="450" y="223" width="3" height="1" fill="#585858"/><rect x="429" y="227" width="3" height="1" fill="#585858"/><rect x="450" y="227" width="3" height="1" fill="#585858"/><rect x="429" y="231" width="5" height="1" fill="#585858"/><rect x="448" y="231" width="5" height="1" fill="#585858"/><rect x="429" y="235" width="3" height="1" fill="#585858"/><rect x="450" y="235" width="3" height="1" fill="#585858"/><rect x="429" y="239" width="3" height="1" fill="#585858"/><rect x="450" y="239" width="3" height="1" fill="#585858"/><rect x="429" y="243" width="3" height="1" fill="#585858"/><rect x="450" y="243" width="3" height="1" fill="#585858"/><rect x="429" y="247" width="3" height="1" fill="#585858"/><rect x="450" y="247" width="3" height="1" fill="#585858"/><rect x="429" y="251" width="5" height="1" fill="#585858"/><rect x="448" y="251" width="5" height="1" fill="#585858"/><rect x="429" y="255" width="3" height="1" fill="#585858"/><rect x="450" y="255" width="3" height="1" fill="#585858"/><rect x="429" y="259" width="3" height="1" fill="#585858"/><rect x="450" y="259" width="3" height="1" fill="#585858"/><rect x="429" y="263" width="3" height="1" fill="#585858"/><rect x="450" y="263" width="3" height="1" fill="#585858"/><rect x="429" y="267" width="3" height="1" fill="#585858"/><rect x="450" y="267" width="3" height="1" fill="#585858"/><rect x="429" y="271" width="5" height="1" fill="#585858"/><rect x="448" y="271" width="5" height="1" fill="#585858"/><rect x="429" y="275" width="3" height="1" fill="#585858"/><rect x="450" y="275" width="3" height="1" fill="#585858"/><rect x="429" y="279" width="3" height="1" fill="#585858"/><rect x="450" y="279" width="3" height="1" fill="#585858"/><rect x="429" y="283" width="3" height="1" fill="#585858"/><rect x="450" y="283" width="3" height="1" fill="#585858"/>
<g text-anchor="middle" font-size="9.2"><text x="440.8" y="234" fill="#c07020" opacity="0.7">-10</text><text x="441.5" y="234" fill="#182038">-10</text></g>
<g text-anchor="middle" font-size="9.2"><text x="440.8" y="254.6" fill="#c07020" opacity="0.7">0</text><text x="441.5" y="254.6" fill="#182038">0</text></g>
<g text-anchor="middle" font-size="9.2"><text x="440.8" y="274" fill="#c07020" opacity="0.7">10</text><text x="441.5" y="274" fill="#182038">10</text></g>
<path d="M423,247 L428.5,251.5 L423,256 Z" fill="#ff0000"/>
<path d="M459,247 L453.5,251.5 L459,256 Z" fill="#ff0000"/>
<path d="M413,247 L416.5,240 L420,247 L417.3,247 L417.3,255 L420,255 L416.5,262 L413,255 L415.7,255 L415.7,247 Z" fill="#f0a0a8"/>
<text x="485" y="215.9" font-size="9" fill="#1c1c1c" text-anchor="end" stroke="#1c1c1c" stroke-width="0.12">AC</text>
<text x="485" y="229.5" font-size="9" fill="#1c1c1c" text-anchor="end" stroke="#1c1c1c" stroke-width="0.12">DC</text>
<rect x="487" y="202" width="14" height="1" fill="#f4f4f4"/>
<rect x="487" y="202" width="1" height="33" fill="#f4f4f4"/>
<rect x="488" y="203" width="14" height="33" fill="#000"/>
<rect x="489" y="204" width="12" height="31" fill="#b2b2b2"/>
<rect x="500" y="204" width="1" height="31" fill="#f0f0f0"/>
<rect x="489" y="234" width="12" height="1" fill="#f0f0f0"/>
<rect x="493" y="219" width="2" height="11" fill="#000"/>
<rect x="495" y="219" width="1" height="11" fill="#f0f0f0"/>
<rect x="493" y="229" width="3" height="1" fill="#f0f0f0"/>
<rect x="489" y="204" width="11" height="15" fill="#505050"/>
<rect x="489" y="204" width="10" height="14" fill="#f4f4f4"/>
<rect x="490" y="205" width="9" height="13" fill="#d2d2d2"/>
<rect x="491" y="206" width="7" height="1" fill="#505050"/>
<rect x="491" y="209" width="7" height="1" fill="#505050"/>
<rect x="491" y="212" width="7" height="1" fill="#505050"/>
<rect x="491" y="215" width="7" height="1" fill="#505050"/>
<rect x="487" y="247" width="14" height="1" fill="#f4f4f4"/>
<rect x="487" y="247" width="1" height="33" fill="#f4f4f4"/>
<rect x="488" y="248" width="14" height="33" fill="#000"/>
<rect x="489" y="249" width="12" height="31" fill="#b2b2b2"/>
<rect x="500" y="249" width="1" height="31" fill="#f0f0f0"/>
<rect x="489" y="279" width="12" height="1" fill="#f0f0f0"/>
<rect x="493" y="264" width="2" height="11" fill="#000"/>
<rect x="495" y="264" width="1" height="11" fill="#f0f0f0"/>
<rect x="493" y="274" width="3" height="1" fill="#f0f0f0"/>
<rect x="489" y="249" width="11" height="15" fill="#505050"/>
<rect x="489" y="249" width="10" height="14" fill="#f4f4f4"/>
<rect x="490" y="250" width="9" height="13" fill="#d2d2d2"/>
<rect x="491" y="251" width="7" height="1" fill="#505050"/>
<rect x="491" y="254" width="7" height="1" fill="#505050"/>
<rect x="491" y="257" width="7" height="1" fill="#505050"/>
<rect x="491" y="260" width="7" height="1" fill="#505050"/>
<path d="M476.3,261.5 L480.2,261.5 L480.2,251.8 L483,251.8 M476.3,266.7 L480.2,266.7 L480.2,276.3 L483,276.3" fill="none" stroke="#303030" stroke-width="1.4"/>
<text x="484.5" y="303.8" font-size="9" fill="#1c1c1c" text-anchor="end" stroke="#1c1c1c" stroke-width="0.12">Auto</text>
<text x="484.5" y="318.5" font-size="9" fill="#1c1c1c" text-anchor="end" stroke="#1c1c1c" stroke-width="0.12">One-Shot</text>
<text x="484.8" y="334.6" font-size="9.2" fill="#1c1c1c" text-anchor="end" textLength="35.6" lengthAdjust="spacingAndGlyphs">Cursors</text>
<rect x="487" y="293" width="15" height="15" fill="#000"/>
<rect x="487" y="293" width="14" height="14" fill="#f0f0f0"/>
<rect x="488" y="294" width="13" height="13" fill="url(#btnp)"/>
<rect x="487" y="309" width="15" height="15" fill="#000"/>
<rect x="487" y="309" width="14" height="14" fill="#f0f0f0"/>
<rect x="488" y="310" width="13" height="13" fill="url(#btnd)"/>
<rect x="487" y="325" width="15" height="15" fill="#000"/>
<rect x="487" y="325" width="14" height="14" fill="#f0f0f0"/>
<rect x="488" y="326" width="13" height="13" fill="url(#btnd)"/>
<text x="456.5" y="354.7" font-size="9" fill="#1c1c1c" text-anchor="middle" stroke="#1c1c1c" stroke-width="0.12">Source</text>
<text x="436.8" y="365.5" font-size="8.2" fill="#ffff00" text-anchor="middle" font-weight="bold">A</text>
<text x="451.3" y="365.5" font-size="8.2" fill="#1a98e8" text-anchor="middle" font-weight="bold">B</text>
<text x="465.5" y="365.5" font-size="8.2" fill="#e0208a" text-anchor="middle" font-weight="bold">C</text>
<text x="480" y="365.5" font-size="8.2" fill="#10a040" text-anchor="middle" font-weight="bold">D</text>
<rect x="425" y="368" width="64" height="1" fill="#f4f4f4"/>
<rect x="425" y="368" width="1" height="15" fill="#f4f4f4"/>
<rect x="426" y="369" width="63" height="14" fill="#000"/>
<rect x="427" y="370" width="61" height="12" fill="#b2b2b2"/>
<rect x="427" y="381" width="61" height="1" fill="#f0f0f0"/>
<rect x="487" y="370" width="1" height="12" fill="#f0f0f0"/>
<rect x="431" y="374" width="51" height="2" fill="#000"/>
<rect x="431" y="376" width="51" height="1" fill="#f0f0f0"/>
<rect x="442" y="370" width="15" height="11" fill="#505050"/>
<rect x="442" y="370" width="14" height="10" fill="#f4f4f4"/>
<rect x="443" y="371" width="13" height="9" fill="#d2d2d2"/>
<rect x="444" y="372" width="1" height="7" fill="#505050"/>
<rect x="447" y="372" width="1" height="7" fill="#505050"/>
<rect x="450" y="372" width="1" height="7" fill="#505050"/>
<rect x="453" y="372" width="1" height="7" fill="#505050"/>
<text x="534.2" y="209.5" font-size="9" fill="#1c1c1c" text-anchor="middle" stroke="#1c1c1c" stroke-width="0.12">Position</text>
<rect x="515" y="212" width="40" height="1" fill="#f4f4f4"/>
<rect x="515" y="212" width="1" height="81" fill="#f4f4f4"/>
<rect x="516" y="213" width="39" height="80" fill="#000"/>
<rect x="517" y="214" width="37" height="78" fill="#b2b2b2"/>
<rect x="517" y="214" width="37" height="1" fill="#c8c8c8"/>
<rect x="553" y="214" width="1" height="78" fill="#f0f0f0"/>
<rect x="517" y="291" width="37" height="1" fill="#f0f0f0"/>
<rect x="522" y="215" width="1" height="75" fill="#f0f0f0"/>
<rect x="523" y="215" width="24" height="75" fill="url(#cylv)"/>
<rect x="547" y="215" width="1" height="75" fill="#000"/>
<rect x="523" y="215" width="3" height="1" fill="#585858"/><rect x="544" y="215" width="3" height="1" fill="#585858"/><rect x="523" y="219" width="3" height="1" fill="#585858"/><rect x="544" y="219" width="3" height="1" fill="#585858"/><rect x="523" y="223" width="3" height="1" fill="#585858"/><rect x="544" y="223" width="3" height="1" fill="#585858"/><rect x="523" y="227" width="3" height="1" fill="#585858"/><rect x="544" y="227" width="3" height="1" fill="#585858"/><rect x="523" y="231" width="5" height="1" fill="#585858"/><rect x="542" y="231" width="5" height="1" fill="#585858"/><rect x="523" y="235" width="3" height="1" fill="#585858"/><rect x="544" y="235" width="3" height="1" fill="#585858"/><rect x="523" y="239" width="3" height="1" fill="#585858"/><rect x="544" y="239" width="3" height="1" fill="#585858"/><rect x="523" y="243" width="3" height="1" fill="#585858"/><rect x="544" y="243" width="3" height="1" fill="#585858"/><rect x="523" y="247" width="3" height="1" fill="#585858"/><rect x="544" y="247" width="3" height="1" fill="#585858"/><rect x="523" y="251" width="5" height="1" fill="#585858"/><rect x="542" y="251" width="5" height="1" fill="#585858"/><rect x="523" y="255" width="3" height="1" fill="#585858"/><rect x="544" y="255" width="3" height="1" fill="#585858"/><rect x="523" y="259" width="3" height="1" fill="#585858"/><rect x="544" y="259" width="3" height="1" fill="#585858"/><rect x="523" y="263" width="3" height="1" fill="#585858"/><rect x="544" y="263" width="3" height="1" fill="#585858"/><rect x="523" y="267" width="3" height="1" fill="#585858"/><rect x="544" y="267" width="3" height="1" fill="#585858"/><rect x="523" y="271" width="5" height="1" fill="#585858"/><rect x="542" y="271" width="5" height="1" fill="#585858"/><rect x="523" y="275" width="3" height="1" fill="#585858"/><rect x="544" y="275" width="3" height="1" fill="#585858"/><rect x="523" y="279" width="3" height="1" fill="#585858"/><rect x="544" y="279" width="3" height="1" fill="#585858"/><rect x="523" y="283" width="3" height="1" fill="#585858"/><rect x="544" y="283" width="3" height="1" fill="#585858"/>
<g text-anchor="middle" font-size="9.2"><text x="534.8" y="234" fill="#c07020" opacity="0.7">-10</text><text x="535.5" y="234" fill="#182038">-10</text></g>
<g text-anchor="middle" font-size="9.2"><text x="534.8" y="254.6" fill="#c07020" opacity="0.7">0</text><text x="535.5" y="254.6" fill="#182038">0</text></g>
<g text-anchor="middle" font-size="9.2"><text x="534.8" y="274" fill="#c07020" opacity="0.7">10</text><text x="535.5" y="274" fill="#182038">10</text></g>
<path d="M517,247 L522.5,251.5 L517,256 Z" fill="#ff0000"/>
<path d="M553,247 L547.5,251.5 L553,256 Z" fill="#ff0000"/>
<path d="M507,247 L510.5,240 L514,247 L511.3,247 L511.3,255 L514,255 L510.5,262 L507,255 L509.7,255 L509.7,247 Z" fill="#ffff00"/>
<text x="579.3" y="215.7" font-size="9" fill="#1c1c1c" text-anchor="end" stroke="#1c1c1c" stroke-width="0.12">AC</text>
<text x="579.3" y="229.7" font-size="9" fill="#1c1c1c" text-anchor="end" stroke="#1c1c1c" stroke-width="0.12">DC</text>
<text x="579.3" y="243.7" font-size="9" fill="#1c1c1c" text-anchor="end" stroke="#1c1c1c" stroke-width="0.12">GND</text>
<text x="579.3" y="257.7" font-size="9" fill="#1c1c1c" text-anchor="end" stroke="#1c1c1c" stroke-width="0.12">OFF</text>
<rect x="581" y="202" width="14" height="1" fill="#f4f4f4"/>
<rect x="581" y="202" width="1" height="62" fill="#f4f4f4"/>
<rect x="582" y="203" width="14" height="62" fill="#000"/>
<rect x="583" y="204" width="12" height="60" fill="#b2b2b2"/>
<rect x="594" y="204" width="1" height="60" fill="#f0f0f0"/>
<rect x="583" y="263" width="12" height="1" fill="#f0f0f0"/>
<rect x="587" y="219" width="2" height="40" fill="#000"/>
<rect x="589" y="219" width="1" height="40" fill="#f0f0f0"/>
<rect x="587" y="258" width="3" height="1" fill="#f0f0f0"/>
<rect x="583" y="204" width="11" height="15" fill="#505050"/>
<rect x="583" y="204" width="10" height="14" fill="#f4f4f4"/>
<rect x="584" y="205" width="9" height="13" fill="#d2d2d2"/>
<rect x="585" y="206" width="7" height="1" fill="#505050"/>
<rect x="585" y="209" width="7" height="1" fill="#505050"/>
<rect x="585" y="212" width="7" height="1" fill="#505050"/>
<rect x="585" y="215" width="7" height="1" fill="#505050"/>
<text x="579.4" y="276.8" font-size="9" fill="#1c1c1c" text-anchor="end" stroke="#1c1c1c" stroke-width="0.12">Invert</text>
<rect x="581" y="267" width="15" height="15" fill="#000"/>
<rect x="581" y="267" width="14" height="14" fill="#f0f0f0"/>
<rect x="582" y="268" width="13" height="13" fill="url(#btnd)"/>
<text x="579.4" y="293.2" font-size="9" fill="#1c1c1c" text-anchor="end" stroke="#1c1c1c" stroke-width="0.12">A+B</text>
<rect x="581" y="283" width="15" height="15" fill="#000"/>
<rect x="581" y="283" width="14" height="14" fill="#f0f0f0"/>
<rect x="582" y="284" width="13" height="13" fill="url(#btnd)"/>
<text x="628.2" y="209.5" font-size="9" fill="#1c1c1c" text-anchor="middle" stroke="#1c1c1c" stroke-width="0.12">Position</text>
<rect x="609" y="212" width="40" height="1" fill="#f4f4f4"/>
<rect x="609" y="212" width="1" height="81" fill="#f4f4f4"/>
<rect x="610" y="213" width="39" height="80" fill="#000"/>
<rect x="611" y="214" width="37" height="78" fill="#b2b2b2"/>
<rect x="611" y="214" width="37" height="1" fill="#c8c8c8"/>
<rect x="647" y="214" width="1" height="78" fill="#f0f0f0"/>
<rect x="611" y="291" width="37" height="1" fill="#f0f0f0"/>
<rect x="616" y="215" width="1" height="75" fill="#f0f0f0"/>
<rect x="617" y="215" width="24" height="75" fill="url(#cylv)"/>
<rect x="641" y="215" width="1" height="75" fill="#000"/>
<rect x="617" y="215" width="3" height="1" fill="#585858"/><rect x="638" y="215" width="3" height="1" fill="#585858"/><rect x="617" y="219" width="3" height="1" fill="#585858"/><rect x="638" y="219" width="3" height="1" fill="#585858"/><rect x="617" y="223" width="3" height="1" fill="#585858"/><rect x="638" y="223" width="3" height="1" fill="#585858"/><rect x="617" y="227" width="3" height="1" fill="#585858"/><rect x="638" y="227" width="3" height="1" fill="#585858"/><rect x="617" y="231" width="5" height="1" fill="#585858"/><rect x="636" y="231" width="5" height="1" fill="#585858"/><rect x="617" y="235" width="3" height="1" fill="#585858"/><rect x="638" y="235" width="3" height="1" fill="#585858"/><rect x="617" y="239" width="3" height="1" fill="#585858"/><rect x="638" y="239" width="3" height="1" fill="#585858"/><rect x="617" y="243" width="3" height="1" fill="#585858"/><rect x="638" y="243" width="3" height="1" fill="#585858"/><rect x="617" y="247" width="3" height="1" fill="#585858"/><rect x="638" y="247" width="3" height="1" fill="#585858"/><rect x="617" y="251" width="5" height="1" fill="#585858"/><rect x="636" y="251" width="5" height="1" fill="#585858"/><rect x="617" y="255" width="3" height="1" fill="#585858"/><rect x="638" y="255" width="3" height="1" fill="#585858"/><rect x="617" y="259" width="3" height="1" fill="#585858"/><rect x="638" y="259" width="3" height="1" fill="#585858"/><rect x="617" y="263" width="3" height="1" fill="#585858"/><rect x="638" y="263" width="3" height="1" fill="#585858"/><rect x="617" y="267" width="3" height="1" fill="#585858"/><rect x="638" y="267" width="3" height="1" fill="#585858"/><rect x="617" y="271" width="5" height="1" fill="#585858"/><rect x="636" y="271" width="5" height="1" fill="#585858"/><rect x="617" y="275" width="3" height="1" fill="#585858"/><rect x="638" y="275" width="3" height="1" fill="#585858"/><rect x="617" y="279" width="3" height="1" fill="#585858"/><rect x="638" y="279" width="3" height="1" fill="#585858"/><rect x="617" y="283" width="3" height="1" fill="#585858"/><rect x="638" y="283" width="3" height="1" fill="#585858"/>
<g text-anchor="middle" font-size="9.2"><text x="628.8" y="234" fill="#c07020" opacity="0.7">-10</text><text x="629.5" y="234" fill="#182038">-10</text></g>
<g text-anchor="middle" font-size="9.2"><text x="628.8" y="254.6" fill="#c07020" opacity="0.7">0</text><text x="629.5" y="254.6" fill="#182038">0</text></g>
<g text-anchor="middle" font-size="9.2"><text x="628.8" y="274" fill="#c07020" opacity="0.7">10</text><text x="629.5" y="274" fill="#182038">10</text></g>
<path d="M611,247 L616.5,251.5 L611,256 Z" fill="#ff0000"/>
<path d="M647,247 L641.5,251.5 L647,256 Z" fill="#ff0000"/>
<path d="M601,247 L604.5,240 L608,247 L605.3,247 L605.3,255 L608,255 L604.5,262 L601,255 L603.7,255 L603.7,247 Z" fill="#e0208a"/>
<text x="673.3" y="215.7" font-size="9" fill="#1c1c1c" text-anchor="end" stroke="#1c1c1c" stroke-width="0.12">AC</text>
<text x="673.3" y="229.7" font-size="9" fill="#1c1c1c" text-anchor="end" stroke="#1c1c1c" stroke-width="0.12">DC</text>
<text x="673.3" y="243.7" font-size="9" fill="#1c1c1c" text-anchor="end" stroke="#1c1c1c" stroke-width="0.12">GND</text>
<text x="673.3" y="257.7" font-size="9" fill="#1c1c1c" text-anchor="end" stroke="#1c1c1c" stroke-width="0.12">OFF</text>
<rect x="675" y="202" width="14" height="1" fill="#f4f4f4"/>
<rect x="675" y="202" width="1" height="62" fill="#f4f4f4"/>
<rect x="676" y="203" width="14" height="62" fill="#000"/>
<rect x="677" y="204" width="12" height="60" fill="#b2b2b2"/>
<rect x="688" y="204" width="1" height="60" fill="#f0f0f0"/>
<rect x="677" y="263" width="12" height="1" fill="#f0f0f0"/>
<rect x="681" y="209" width="2" height="39" fill="#000"/>
<rect x="683" y="209" width="1" height="39" fill="#f0f0f0"/>
<rect x="681" y="247" width="3" height="1" fill="#f0f0f0"/>
<rect x="677" y="248" width="11" height="15" fill="#505050"/>
<rect x="677" y="248" width="10" height="14" fill="#f4f4f4"/>
<rect x="678" y="249" width="9" height="13" fill="#d2d2d2"/>
<rect x="679" y="250" width="7" height="1" fill="#505050"/>
<rect x="679" y="253" width="7" height="1" fill="#505050"/>
<rect x="679" y="256" width="7" height="1" fill="#505050"/>
<rect x="679" y="259" width="7" height="1" fill="#505050"/>
<text x="673.4" y="276.8" font-size="9" fill="#1c1c1c" text-anchor="end" stroke="#1c1c1c" stroke-width="0.12">Invert</text>
<rect x="675" y="267" width="15" height="15" fill="#000"/>
<rect x="675" y="267" width="14" height="14" fill="#f0f0f0"/>
<rect x="676" y="268" width="13" height="13" fill="url(#btnd)"/>
<text x="673.4" y="293.2" font-size="9" fill="#1c1c1c" text-anchor="end" stroke="#1c1c1c" stroke-width="0.12">C+D</text>
<rect x="675" y="283" width="15" height="15" fill="#000"/>
<rect x="675" y="283" width="14" height="14" fill="#f0f0f0"/>
<rect x="676" y="284" width="13" height="13" fill="url(#btnd)"/>
<text x="534.2" y="421.5" font-size="9" fill="#1c1c1c" text-anchor="middle" stroke="#1c1c1c" stroke-width="0.12">Position</text>
<rect x="515" y="424" width="40" height="1" fill="#f4f4f4"/>
<rect x="515" y="424" width="1" height="81" fill="#f4f4f4"/>
<rect x="516" y="425" width="39" height="80" fill="#000"/>
<rect x="517" y="426" width="37" height="78" fill="#b2b2b2"/>
<rect x="517" y="426" width="37" height="1" fill="#c8c8c8"/>
<rect x="553" y="426" width="1" height="78" fill="#f0f0f0"/>
<rect x="517" y="503" width="37" height="1" fill="#f0f0f0"/>
<rect x="522" y="427" width="1" height="75" fill="#f0f0f0"/>
<rect x="523" y="427" width="24" height="75" fill="url(#cylv)"/>
<rect x="547" y="427" width="1" height="75" fill="#000"/>
<rect x="523" y="427" width="3" height="1" fill="#585858"/><rect x="544" y="427" width="3" height="1" fill="#585858"/><rect x="523" y="431" width="3" height="1" fill="#585858"/><rect x="544" y="431" width="3" height="1" fill="#585858"/><rect x="523" y="435" width="3" height="1" fill="#585858"/><rect x="544" y="435" width="3" height="1" fill="#585858"/><rect x="523" y="439" width="3" height="1" fill="#585858"/><rect x="544" y="439" width="3" height="1" fill="#585858"/><rect x="523" y="443" width="5" height="1" fill="#585858"/><rect x="542" y="443" width="5" height="1" fill="#585858"/><rect x="523" y="447" width="3" height="1" fill="#585858"/><rect x="544" y="447" width="3" height="1" fill="#585858"/><rect x="523" y="451" width="3" height="1" fill="#585858"/><rect x="544" y="451" width="3" height="1" fill="#585858"/><rect x="523" y="455" width="3" height="1" fill="#585858"/><rect x="544" y="455" width="3" height="1" fill="#585858"/><rect x="523" y="459" width="3" height="1" fill="#585858"/><rect x="544" y="459" width="3" height="1" fill="#585858"/><rect x="523" y="463" width="5" height="1" fill="#585858"/><rect x="542" y="463" width="5" height="1" fill="#585858"/><rect x="523" y="467" width="3" height="1" fill="#585858"/><rect x="544" y="467" width="3" height="1" fill="#585858"/><rect x="523" y="471" width="3" height="1" fill="#585858"/><rect x="544" y="471" width="3" height="1" fill="#585858"/><rect x="523" y="475" width="3" height="1" fill="#585858"/><rect x="544" y="475" width="3" height="1" fill="#585858"/><rect x="523" y="479" width="3" height="1" fill="#585858"/><rect x="544" y="479" width="3" height="1" fill="#585858"/><rect x="523" y="483" width="5" height="1" fill="#585858"/><rect x="542" y="483" width="5" height="1" fill="#585858"/><rect x="523" y="487" width="3" height="1" fill="#585858"/><rect x="544" y="487" width="3" height="1" fill="#585858"/><rect x="523" y="491" width="3" height="1" fill="#585858"/><rect x="544" y="491" width="3" height="1" fill="#585858"/><rect x="523" y="495" width="3" height="1" fill="#585858"/><rect x="544" y="495" width="3" height="1" fill="#585858"/>
<g text-anchor="middle" font-size="9.2"><text x="534.8" y="446" fill="#c07020" opacity="0.7">-10</text><text x="535.5" y="446" fill="#182038">-10</text></g>
<g text-anchor="middle" font-size="9.2"><text x="534.8" y="466.6" fill="#c07020" opacity="0.7">0</text><text x="535.5" y="466.6" fill="#182038">0</text></g>
<g text-anchor="middle" font-size="9.2"><text x="534.8" y="486" fill="#c07020" opacity="0.7">10</text><text x="535.5" y="486" fill="#182038">10</text></g>
<path d="M517,459 L522.5,463.5 L517,468 Z" fill="#ff0000"/>
<path d="M553,459 L547.5,463.5 L553,468 Z" fill="#ff0000"/>
<path d="M507,459 L510.5,452 L514,459 L511.3,459 L511.3,467 L514,467 L510.5,474 L507,467 L509.7,467 L509.7,459 Z" fill="#1890e0"/>
<text x="579.3" y="427.7" font-size="9" fill="#1c1c1c" text-anchor="end" stroke="#1c1c1c" stroke-width="0.12">AC</text>
<text x="579.3" y="441.7" font-size="9" fill="#1c1c1c" text-anchor="end" stroke="#1c1c1c" stroke-width="0.12">DC</text>
<text x="579.3" y="455.7" font-size="9" fill="#1c1c1c" text-anchor="end" stroke="#1c1c1c" stroke-width="0.12">GND</text>
<text x="579.3" y="469.7" font-size="9" fill="#1c1c1c" text-anchor="end" stroke="#1c1c1c" stroke-width="0.12">OFF</text>
<rect x="581" y="414" width="14" height="1" fill="#f4f4f4"/>
<rect x="581" y="414" width="1" height="62" fill="#f4f4f4"/>
<rect x="582" y="415" width="14" height="62" fill="#000"/>
<rect x="583" y="416" width="12" height="60" fill="#b2b2b2"/>
<rect x="594" y="416" width="1" height="60" fill="#f0f0f0"/>
<rect x="583" y="475" width="12" height="1" fill="#f0f0f0"/>
<rect x="587" y="431" width="2" height="40" fill="#000"/>
<rect x="589" y="431" width="1" height="40" fill="#f0f0f0"/>
<rect x="587" y="470" width="3" height="1" fill="#f0f0f0"/>
<rect x="583" y="416" width="11" height="15" fill="#505050"/>
<rect x="583" y="416" width="10" height="14" fill="#f4f4f4"/>
<rect x="584" y="417" width="9" height="13" fill="#d2d2d2"/>
<rect x="585" y="418" width="7" height="1" fill="#505050"/>
<rect x="585" y="421" width="7" height="1" fill="#505050"/>
<rect x="585" y="424" width="7" height="1" fill="#505050"/>
<rect x="585" y="427" width="7" height="1" fill="#505050"/>
<text x="579.4" y="488.8" font-size="9" fill="#1c1c1c" text-anchor="end" stroke="#1c1c1c" stroke-width="0.12">Invert</text>
<rect x="581" y="479" width="15" height="15" fill="#000"/>
<rect x="581" y="479" width="14" height="14" fill="#f0f0f0"/>
<rect x="582" y="480" width="13" height="13" fill="url(#btnd)"/>
<text x="628.2" y="421.5" font-size="9" fill="#1c1c1c" text-anchor="middle" stroke="#1c1c1c" stroke-width="0.12">Position</text>
<rect x="609" y="424" width="40" height="1" fill="#f4f4f4"/>
<rect x="609" y="424" width="1" height="81" fill="#f4f4f4"/>
<rect x="610" y="425" width="39" height="80" fill="#000"/>
<rect x="611" y="426" width="37" height="78" fill="#b2b2b2"/>
<rect x="611" y="426" width="37" height="1" fill="#c8c8c8"/>
<rect x="647" y="426" width="1" height="78" fill="#f0f0f0"/>
<rect x="611" y="503" width="37" height="1" fill="#f0f0f0"/>
<rect x="616" y="427" width="1" height="75" fill="#f0f0f0"/>
<rect x="617" y="427" width="24" height="75" fill="url(#cylv)"/>
<rect x="641" y="427" width="1" height="75" fill="#000"/>
<rect x="617" y="427" width="3" height="1" fill="#585858"/><rect x="638" y="427" width="3" height="1" fill="#585858"/><rect x="617" y="431" width="3" height="1" fill="#585858"/><rect x="638" y="431" width="3" height="1" fill="#585858"/><rect x="617" y="435" width="3" height="1" fill="#585858"/><rect x="638" y="435" width="3" height="1" fill="#585858"/><rect x="617" y="439" width="3" height="1" fill="#585858"/><rect x="638" y="439" width="3" height="1" fill="#585858"/><rect x="617" y="443" width="5" height="1" fill="#585858"/><rect x="636" y="443" width="5" height="1" fill="#585858"/><rect x="617" y="447" width="3" height="1" fill="#585858"/><rect x="638" y="447" width="3" height="1" fill="#585858"/><rect x="617" y="451" width="3" height="1" fill="#585858"/><rect x="638" y="451" width="3" height="1" fill="#585858"/><rect x="617" y="455" width="3" height="1" fill="#585858"/><rect x="638" y="455" width="3" height="1" fill="#585858"/><rect x="617" y="459" width="3" height="1" fill="#585858"/><rect x="638" y="459" width="3" height="1" fill="#585858"/><rect x="617" y="463" width="5" height="1" fill="#585858"/><rect x="636" y="463" width="5" height="1" fill="#585858"/><rect x="617" y="467" width="3" height="1" fill="#585858"/><rect x="638" y="467" width="3" height="1" fill="#585858"/><rect x="617" y="471" width="3" height="1" fill="#585858"/><rect x="638" y="471" width="3" height="1" fill="#585858"/><rect x="617" y="475" width="3" height="1" fill="#585858"/><rect x="638" y="475" width="3" height="1" fill="#585858"/><rect x="617" y="479" width="3" height="1" fill="#585858"/><rect x="638" y="479" width="3" height="1" fill="#585858"/><rect x="617" y="483" width="5" height="1" fill="#585858"/><rect x="636" y="483" width="5" height="1" fill="#585858"/><rect x="617" y="487" width="3" height="1" fill="#585858"/><rect x="638" y="487" width="3" height="1" fill="#585858"/><rect x="617" y="491" width="3" height="1" fill="#585858"/><rect x="638" y="491" width="3" height="1" fill="#585858"/><rect x="617" y="495" width="3" height="1" fill="#585858"/><rect x="638" y="495" width="3" height="1" fill="#585858"/>
<g text-anchor="middle" font-size="9.2"><text x="628.8" y="446" fill="#c07020" opacity="0.7">-130</text><text x="629.5" y="446" fill="#182038">-130</text></g>
<g text-anchor="middle" font-size="9.2"><text x="628.8" y="466.6" fill="#c07020" opacity="0.7">-120</text><text x="629.5" y="466.6" fill="#182038">-120</text></g>
<g text-anchor="middle" font-size="9.2"><text x="628.8" y="486" fill="#c07020" opacity="0.7">-110</text><text x="629.5" y="486" fill="#182038">-110</text></g>
<path d="M611,459 L616.5,463.5 L611,468 Z" fill="#ff0000"/>
<path d="M647,459 L641.5,463.5 L647,468 Z" fill="#ff0000"/>
<path d="M601,459 L604.5,452 L608,459 L605.3,459 L605.3,467 L608,467 L604.5,474 L601,467 L603.7,467 L603.7,459 Z" fill="#10a040"/>
<text x="673.3" y="427.7" font-size="9" fill="#1c1c1c" text-anchor="end" stroke="#1c1c1c" stroke-width="0.12">AC</text>
<text x="673.3" y="441.7" font-size="9" fill="#1c1c1c" text-anchor="end" stroke="#1c1c1c" stroke-width="0.12">DC</text>
<text x="673.3" y="455.7" font-size="9" fill="#1c1c1c" text-anchor="end" stroke="#1c1c1c" stroke-width="0.12">GND</text>
<text x="673.3" y="469.7" font-size="9" fill="#1c1c1c" text-anchor="end" stroke="#1c1c1c" stroke-width="0.12">OFF</text>
<rect x="675" y="414" width="14" height="1" fill="#f4f4f4"/>
<rect x="675" y="414" width="1" height="62" fill="#f4f4f4"/>
<rect x="676" y="415" width="14" height="62" fill="#000"/>
<rect x="677" y="416" width="12" height="60" fill="#b2b2b2"/>
<rect x="688" y="416" width="1" height="60" fill="#f0f0f0"/>
<rect x="677" y="475" width="12" height="1" fill="#f0f0f0"/>
<rect x="681" y="421" width="2" height="39" fill="#000"/>
<rect x="683" y="421" width="1" height="39" fill="#f0f0f0"/>
<rect x="681" y="459" width="3" height="1" fill="#f0f0f0"/>
<rect x="677" y="460" width="11" height="15" fill="#505050"/>
<rect x="677" y="460" width="10" height="14" fill="#f4f4f4"/>
<rect x="678" y="461" width="9" height="13" fill="#d2d2d2"/>
<rect x="679" y="462" width="7" height="1" fill="#505050"/>
<rect x="679" y="465" width="7" height="1" fill="#505050"/>
<rect x="679" y="468" width="7" height="1" fill="#505050"/>
<rect x="679" y="471" width="7" height="1" fill="#505050"/>
<text x="673.4" y="488.8" font-size="9" fill="#1c1c1c" text-anchor="end" stroke="#1c1c1c" stroke-width="0.12">Invert</text>
<rect x="675" y="479" width="15" height="15" fill="#000"/>
<rect x="675" y="479" width="14" height="14" fill="#f0f0f0"/>
<rect x="676" y="480" width="13" height="13" fill="url(#btnd)"/>
<path d="M507.70,381.90 L507.70,338.20 A43.6,43.6 0 0 1 572.77,300.25 L551.3,338.2 L532.20,361.30 L532.20,381.90 Z" fill="#ffffff" stroke="#3a3a3a" stroke-width="1.1"/>
<path d="M594.90,381.90 L594.90,338.20 A43.6,43.6 0 0 0 576.31,302.48 L551.3,338.2 L570.40,361.30 L570.40,381.90 Z" fill="#ffffff" stroke="#3a3a3a" stroke-width="1.1"/>
<line x1="530.44" y1="359.06" x2="527.54" y2="361.96" stroke="#303030" stroke-width="1"/><text x="524.08" y="367.82" font-size="7" fill="#1a1a1a" text-anchor="middle">20</text><line x1="524.05" y1="349.49" x2="520.26" y2="351.06" stroke="#303030" stroke-width="1"/><text x="515.73" y="355.33" font-size="7" fill="#1a1a1a" text-anchor="middle">10</text><line x1="521.80" y1="338.20" x2="517.70" y2="338.20" stroke="#303030" stroke-width="1"/><text x="512.80" y="340.60" font-size="7" fill="#1a1a1a" text-anchor="middle">5</text><line x1="524.05" y1="326.91" x2="520.26" y2="325.34" stroke="#303030" stroke-width="1"/><text x="515.73" y="325.87" font-size="7" fill="#1a1a1a" text-anchor="middle">2</text><line x1="530.44" y1="317.34" x2="527.54" y2="314.44" stroke="#303030" stroke-width="1"/><text x="524.08" y="313.38" font-size="7" fill="#1a1a1a" text-anchor="middle">1</text><line x1="540.01" y1="310.95" x2="538.44" y2="307.16" stroke="#303030" stroke-width="1"/><text x="536.57" y="305.03" font-size="7" fill="#1a1a1a" text-anchor="middle">0.5</text><line x1="551.30" y1="308.70" x2="551.30" y2="304.60" stroke="#303030" stroke-width="1"/><text x="551.30" y="302.10" font-size="7" fill="#1a1a1a" text-anchor="middle">0.2</text><line x1="562.59" y1="310.95" x2="564.16" y2="307.16" stroke="#303030" stroke-width="1"/><text x="566.03" y="305.03" font-size="7" fill="#1a1a1a" text-anchor="middle">0.1</text><line x1="572.16" y1="317.34" x2="575.06" y2="314.44" stroke="#303030" stroke-width="1"/><text x="578.52" y="313.38" font-size="7" fill="#1a1a1a" text-anchor="middle">50</text><line x1="578.55" y1="326.91" x2="582.34" y2="325.34" stroke="#303030" stroke-width="1"/><text x="586.87" y="325.87" font-size="7" fill="#1a1a1a" text-anchor="middle">20</text><line x1="580.80" y1="338.20" x2="584.90" y2="338.20" stroke="#303030" stroke-width="1"/><text x="589.80" y="340.60" font-size="7" fill="#1a1a1a" text-anchor="middle">10</text><line x1="578.55" y1="349.49" x2="582.34" y2="351.06" stroke="#303030" stroke-width="1"/><text x="586.87" y="355.33" font-size="7" fill="#1a1a1a" text-anchor="middle">5</text><line x1="572.16" y1="359.06" x2="575.06" y2="361.96" stroke="#303030" stroke-width="1"/><text x="578.52" y="367.82" font-size="7" fill="#1a1a1a" text-anchor="middle">2</text>
<text x="519.1999999999999" y="377.59999999999997" font-size="9.2" fill="#333" text-anchor="middle">V</text>
<text x="583.5999999999999" y="377.8" font-size="9.2" fill="#333" text-anchor="middle">mV</text>
<rect x="534.3" y="369.4" width="35" height="13" fill="#e8e8e8"/>
<rect x="534.3" y="369.4" width="34" height="12" fill="#000"/>
<rect x="535.3" y="370.4" width="33" height="11" fill="#ffffff"/>
<text x="536.0999999999999" y="377.7" font-size="9.2" fill="#3848d0">0.1</text>
<circle cx="551.3" cy="338.2" r="30.3" fill="url(#rim)"/>
<circle cx="550.9" cy="337.8" r="29.3" fill="url(#knob)"/>
<circle cx="551.3" cy="338.2" r="29.8" fill="none" stroke="#505050" stroke-width="0.7" opacity="0.8"/>
<circle cx="551.3" cy="338.2" r="16.3" fill="url(#ring)"/>
<circle cx="551.0999999999999" cy="338.0" r="13.6" fill="url(#cap)"/>
<polygon points="561.60,313.50 554.00,318.90 563.80,322.70" fill="#ffee00"/><polygon points="560.20,342.20 554.80,347.65 562.20,349.30" fill="#ffee00"/>
<path d="M601.70,381.90 L601.70,338.20 A43.6,43.6 0 0 1 666.77,300.25 L645.3,338.2 L626.20,361.30 L626.20,381.90 Z" fill="#ffffff" stroke="#3a3a3a" stroke-width="1.1"/>
<path d="M688.90,381.90 L688.90,338.20 A43.6,43.6 0 0 0 670.31,302.48 L645.3,338.2 L664.40,361.30 L664.40,381.90 Z" fill="#ffffff" stroke="#3a3a3a" stroke-width="1.1"/>
<line x1="624.44" y1="359.06" x2="621.54" y2="361.96" stroke="#303030" stroke-width="1"/><text x="618.08" y="367.82" font-size="7" fill="#1a1a1a" text-anchor="middle">20</text><line x1="618.05" y1="349.49" x2="614.26" y2="351.06" stroke="#303030" stroke-width="1"/><text x="609.73" y="355.33" font-size="7" fill="#1a1a1a" text-anchor="middle">10</text><line x1="615.80" y1="338.20" x2="611.70" y2="338.20" stroke="#303030" stroke-width="1"/><text x="606.80" y="340.60" font-size="7" fill="#1a1a1a" text-anchor="middle">5</text><line x1="618.05" y1="326.91" x2="614.26" y2="325.34" stroke="#303030" stroke-width="1"/><text x="609.73" y="325.87" font-size="7" fill="#1a1a1a" text-anchor="middle">2</text><line x1="624.44" y1="317.34" x2="621.54" y2="314.44" stroke="#303030" stroke-width="1"/><text x="618.08" y="313.38" font-size="7" fill="#1a1a1a" text-anchor="middle">1</text><line x1="634.01" y1="310.95" x2="632.44" y2="307.16" stroke="#303030" stroke-width="1"/><text x="630.57" y="305.03" font-size="7" fill="#1a1a1a" text-anchor="middle">0.5</text><line x1="645.30" y1="308.70" x2="645.30" y2="304.60" stroke="#303030" stroke-width="1"/><text x="645.30" y="302.10" font-size="7" fill="#1a1a1a" text-anchor="middle">0.2</text><line x1="656.59" y1="310.95" x2="658.16" y2="307.16" stroke="#303030" stroke-width="1"/><text x="660.03" y="305.03" font-size="7" fill="#1a1a1a" text-anchor="middle">0.1</text><line x1="666.16" y1="317.34" x2="669.06" y2="314.44" stroke="#303030" stroke-width="1"/><text x="672.52" y="313.38" font-size="7" fill="#1a1a1a" text-anchor="middle">50</text><line x1="672.55" y1="326.91" x2="676.34" y2="325.34" stroke="#303030" stroke-width="1"/><text x="680.87" y="325.87" font-size="7" fill="#1a1a1a" text-anchor="middle">20</text><line x1="674.80" y1="338.20" x2="678.90" y2="338.20" stroke="#303030" stroke-width="1"/><text x="683.80" y="340.60" font-size="7" fill="#1a1a1a" text-anchor="middle">10</text><line x1="672.55" y1="349.49" x2="676.34" y2="351.06" stroke="#303030" stroke-width="1"/><text x="680.87" y="355.33" font-size="7" fill="#1a1a1a" text-anchor="middle">5</text><line x1="666.16" y1="359.06" x2="669.06" y2="361.96" stroke="#303030" stroke-width="1"/><text x="672.52" y="367.82" font-size="7" fill="#1a1a1a" text-anchor="middle">2</text>
<text x="613.1999999999999" y="377.59999999999997" font-size="9.2" fill="#333" text-anchor="middle">V</text>
<text x="677.5999999999999" y="377.8" font-size="9.2" fill="#333" text-anchor="middle">mV</text>
<rect x="628.3" y="369.4" width="35" height="13" fill="#e8e8e8"/>
<rect x="628.3" y="369.4" width="34" height="12" fill="#000"/>
<rect x="629.3" y="370.4" width="33" height="11" fill="#ffffff"/>
<text x="630.0999999999999" y="377.7" font-size="9.2" fill="#3848d0">20m</text>
<circle cx="645.3" cy="338.2" r="30.3" fill="url(#rim)"/>
<circle cx="644.9" cy="337.8" r="29.3" fill="url(#knob)"/>
<circle cx="645.3" cy="338.2" r="29.8" fill="none" stroke="#505050" stroke-width="0.7" opacity="0.8"/>
<circle cx="645.3" cy="338.2" r="16.3" fill="url(#ring)"/>
<circle cx="645.0999999999999" cy="338.0" r="13.6" fill="url(#cap)"/>
<polygon points="661.30,326.10 671.00,328.00 665.60,335.90" fill="#e0208a"/><polygon points="654.20,342.20 648.80,347.65 656.20,349.30" fill="#e0208a"/>
<path d="M507.70,593.90 L507.70,550.20 A43.6,43.6 0 0 1 572.77,512.25 L551.3,550.2 L532.20,573.30 L532.20,593.90 Z" fill="#ffffff" stroke="#3a3a3a" stroke-width="1.1"/>
<path d="M594.90,593.90 L594.90,550.20 A43.6,43.6 0 0 0 576.31,514.48 L551.3,550.2 L570.40,573.30 L570.40,593.90 Z" fill="#ffffff" stroke="#3a3a3a" stroke-width="1.1"/>
<line x1="530.44" y1="571.06" x2="527.54" y2="573.96" stroke="#303030" stroke-width="1"/><text x="524.08" y="579.82" font-size="7" fill="#1a1a1a" text-anchor="middle">20</text><line x1="524.05" y1="561.49" x2="520.26" y2="563.06" stroke="#303030" stroke-width="1"/><text x="515.73" y="567.33" font-size="7" fill="#1a1a1a" text-anchor="middle">10</text><line x1="521.80" y1="550.20" x2="517.70" y2="550.20" stroke="#303030" stroke-width="1"/><text x="512.80" y="552.60" font-size="7" fill="#1a1a1a" text-anchor="middle">5</text><line x1="524.05" y1="538.91" x2="520.26" y2="537.34" stroke="#303030" stroke-width="1"/><text x="515.73" y="537.87" font-size="7" fill="#1a1a1a" text-anchor="middle">2</text><line x1="530.44" y1="529.34" x2="527.54" y2="526.44" stroke="#303030" stroke-width="1"/><text x="524.08" y="525.38" font-size="7" fill="#1a1a1a" text-anchor="middle">1</text><line x1="540.01" y1="522.95" x2="538.44" y2="519.16" stroke="#303030" stroke-width="1"/><text x="536.57" y="517.03" font-size="7" fill="#1a1a1a" text-anchor="middle">0.5</text><line x1="551.30" y1="520.70" x2="551.30" y2="516.60" stroke="#303030" stroke-width="1"/><text x="551.30" y="514.10" font-size="7" fill="#1a1a1a" text-anchor="middle">0.2</text><line x1="562.59" y1="522.95" x2="564.16" y2="519.16" stroke="#303030" stroke-width="1"/><text x="566.03" y="517.03" font-size="7" fill="#1a1a1a" text-anchor="middle">0.1</text><line x1="572.16" y1="529.34" x2="575.06" y2="526.44" stroke="#303030" stroke-width="1"/><text x="578.52" y="525.38" font-size="7" fill="#1a1a1a" text-anchor="middle">50</text><line x1="578.55" y1="538.91" x2="582.34" y2="537.34" stroke="#303030" stroke-width="1"/><text x="586.87" y="537.87" font-size="7" fill="#1a1a1a" text-anchor="middle">20</text><line x1="580.80" y1="550.20" x2="584.90" y2="550.20" stroke="#303030" stroke-width="1"/><text x="589.80" y="552.60" font-size="7" fill="#1a1a1a" text-anchor="middle">10</text><line x1="578.55" y1="561.49" x2="582.34" y2="563.06" stroke="#303030" stroke-width="1"/><text x="586.87" y="567.33" font-size="7" fill="#1a1a1a" text-anchor="middle">5</text><line x1="572.16" y1="571.06" x2="575.06" y2="573.96" stroke="#303030" stroke-width="1"/><text x="578.52" y="579.82" font-size="7" fill="#1a1a1a" text-anchor="middle">2</text>
<text x="519.1999999999999" y="589.6" font-size="9.2" fill="#333" text-anchor="middle">V</text>
<text x="583.5999999999999" y="589.8000000000001" font-size="9.2" fill="#333" text-anchor="middle">mV</text>
<rect x="534.3" y="581.4000000000001" width="35" height="13" fill="#e8e8e8"/>
<rect x="534.3" y="581.4000000000001" width="34" height="12" fill="#000"/>
<rect x="535.3" y="582.4000000000001" width="33" height="11" fill="#ffffff"/>
<text x="536.0999999999999" y="589.7" font-size="9.2" fill="#3848d0">50m</text>
<circle cx="551.3" cy="550.2" r="30.3" fill="url(#rim)"/>
<circle cx="550.9" cy="549.8000000000001" r="29.3" fill="url(#knob)"/>
<circle cx="551.3" cy="550.2" r="29.8" fill="none" stroke="#505050" stroke-width="0.7" opacity="0.8"/>
<circle cx="551.3" cy="550.2" r="16.3" fill="url(#ring)"/>
<circle cx="551.0999999999999" cy="550.0" r="13.6" fill="url(#cap)"/>
<polygon points="561.00,533.20 570.90,530.90 568.70,540.80" fill="#0a8ee0"/><polygon points="560.20,554.20 554.80,559.65 562.20,561.30" fill="#0a8ee0"/>
<path d="M601.70,593.90 L601.70,550.20 A43.6,43.6 0 0 1 666.77,512.25 L645.3,550.2 L626.20,573.30 L626.20,593.90 Z" fill="#ffffff" stroke="#3a3a3a" stroke-width="1.1"/>
<path d="M688.90,593.90 L688.90,550.20 A43.6,43.6 0 0 0 670.31,514.48 L645.3,550.2 L664.40,573.30 L664.40,593.90 Z" fill="#ffffff" stroke="#3a3a3a" stroke-width="1.1"/>
<line x1="624.44" y1="571.06" x2="621.54" y2="573.96" stroke="#303030" stroke-width="1"/><text x="618.08" y="579.82" font-size="7" fill="#1a1a1a" text-anchor="middle">20</text><line x1="618.05" y1="561.49" x2="614.26" y2="563.06" stroke="#303030" stroke-width="1"/><text x="609.73" y="567.33" font-size="7" fill="#1a1a1a" text-anchor="middle">10</text><line x1="615.80" y1="550.20" x2="611.70" y2="550.20" stroke="#303030" stroke-width="1"/><text x="606.80" y="552.60" font-size="7" fill="#1a1a1a" text-anchor="middle">5</text><line x1="618.05" y1="538.91" x2="614.26" y2="537.34" stroke="#303030" stroke-width="1"/><text x="609.73" y="537.87" font-size="7" fill="#1a1a1a" text-anchor="middle">2</text><line x1="624.44" y1="529.34" x2="621.54" y2="526.44" stroke="#303030" stroke-width="1"/><text x="618.08" y="525.38" font-size="7" fill="#1a1a1a" text-anchor="middle">1</text><line x1="634.01" y1="522.95" x2="632.44" y2="519.16" stroke="#303030" stroke-width="1"/><text x="630.57" y="517.03" font-size="7" fill="#1a1a1a" text-anchor="middle">0.5</text><line x1="645.30" y1="520.70" x2="645.30" y2="516.60" stroke="#303030" stroke-width="1"/><text x="645.30" y="514.10" font-size="7" fill="#1a1a1a" text-anchor="middle">0.2</text><line x1="656.59" y1="522.95" x2="658.16" y2="519.16" stroke="#303030" stroke-width="1"/><text x="660.03" y="517.03" font-size="7" fill="#1a1a1a" text-anchor="middle">0.1</text><line x1="666.16" y1="529.34" x2="669.06" y2="526.44" stroke="#303030" stroke-width="1"/><text x="672.52" y="525.38" font-size="7" fill="#1a1a1a" text-anchor="middle">50</text><line x1="672.55" y1="538.91" x2="676.34" y2="537.34" stroke="#303030" stroke-width="1"/><text x="680.87" y="537.87" font-size="7" fill="#1a1a1a" text-anchor="middle">20</text><line x1="674.80" y1="550.20" x2="678.90" y2="550.20" stroke="#303030" stroke-width="1"/><text x="683.80" y="552.60" font-size="7" fill="#1a1a1a" text-anchor="middle">10</text><line x1="672.55" y1="561.49" x2="676.34" y2="563.06" stroke="#303030" stroke-width="1"/><text x="680.87" y="567.33" font-size="7" fill="#1a1a1a" text-anchor="middle">5</text><line x1="666.16" y1="571.06" x2="669.06" y2="573.96" stroke="#303030" stroke-width="1"/><text x="672.52" y="579.82" font-size="7" fill="#1a1a1a" text-anchor="middle">2</text>
<text x="613.1999999999999" y="589.6" font-size="9.2" fill="#333" text-anchor="middle">V</text>
<text x="677.5999999999999" y="589.8000000000001" font-size="9.2" fill="#333" text-anchor="middle">mV</text>
<rect x="628.3" y="581.4000000000001" width="35" height="13" fill="#e8e8e8"/>
<rect x="628.3" y="581.4000000000001" width="34" height="12" fill="#000"/>
<rect x="629.3" y="582.4000000000001" width="33" height="11" fill="#ffffff"/>
<text x="630.0999999999999" y="589.7" font-size="9.2" fill="#3848d0">5</text>
<circle cx="645.3" cy="550.2" r="30.3" fill="url(#rim)"/>
<circle cx="644.9" cy="549.8000000000001" r="29.3" fill="url(#knob)"/>
<circle cx="645.3" cy="550.2" r="29.8" fill="none" stroke="#505050" stroke-width="0.7" opacity="0.8"/>
<circle cx="645.3" cy="550.2" r="16.3" fill="url(#ring)"/>
<circle cx="645.0999999999999" cy="550.0" r="13.6" fill="url(#cap)"/>
<polygon points="618.00,550.60 626.60,545.00 626.60,555.80" fill="#10903a"/><polygon points="654.20,554.20 648.80,559.65 656.20,561.30" fill="#10903a"/>
<path d="M413.70,593.90 L413.70,550.20 A43.6,43.6 0 0 1 478.77,512.25 L457.3,550.2 L438.20,573.30 L438.20,593.90 Z" fill="#ffffff" stroke="#3a3a3a" stroke-width="1.1"/>
<path d="M500.90,593.90 L500.90,550.20 A43.6,43.6 0 0 0 482.31,514.48 L457.3,550.2 L476.40,573.30 L476.40,593.90 Z" fill="#ffffff" stroke="#3a3a3a" stroke-width="1.1"/>
<line x1="436.62" y1="571.24" x2="433.75" y2="574.17" stroke="#303030" stroke-width="1"/><text x="429.00" y="581.60" font-size="7" fill="#1a1a1a" text-anchor="middle">200</text><line x1="431.62" y1="564.73" x2="428.06" y2="566.75" stroke="#303030" stroke-width="1"/><text x="420.50" y="572.70" font-size="7" fill="#1a1a1a" text-anchor="middle">100</text><line x1="428.62" y1="557.09" x2="424.63" y2="558.04" stroke="#303030" stroke-width="1"/><text x="418.00" y="562.70" font-size="7" fill="#1a1a1a" text-anchor="middle">50</text><line x1="427.83" y1="548.91" x2="423.73" y2="548.73" stroke="#303030" stroke-width="1"/><text x="418.40" y="550.90" font-size="7" fill="#1a1a1a" text-anchor="middle">20</text><line x1="429.32" y1="540.84" x2="425.44" y2="539.54" stroke="#303030" stroke-width="1"/><text x="419.70" y="540.80" font-size="7" fill="#1a1a1a" text-anchor="middle">10</text><line x1="432.99" y1="533.49" x2="429.61" y2="531.17" stroke="#303030" stroke-width="1"/><text x="425.30" y="531.15" font-size="7" fill="#1a1a1a" text-anchor="middle">5</text><line x1="438.54" y1="527.44" x2="435.93" y2="524.27" stroke="#303030" stroke-width="1"/><text x="433.10" y="522.60" font-size="7" fill="#1a1a1a" text-anchor="middle">2</text><line x1="445.54" y1="523.15" x2="443.90" y2="519.39" stroke="#303030" stroke-width="1"/><text x="442.30" y="516.90" font-size="7" fill="#1a1a1a" text-anchor="middle">1</text><line x1="453.45" y1="520.95" x2="452.91" y2="516.89" stroke="#303030" stroke-width="1"/><text x="452.40" y="513.20" font-size="7" fill="#1a1a1a" text-anchor="middle">0.5</text><line x1="461.41" y1="520.99" x2="461.98" y2="516.93" stroke="#303030" stroke-width="1"/><text x="463.20" y="513.20" font-size="7" fill="#1a1a1a" text-anchor="middle">0.2</text><line x1="469.30" y1="523.25" x2="470.97" y2="519.50" stroke="#303030" stroke-width="1"/><text x="471.30" y="518.20" font-size="7" fill="#1a1a1a" text-anchor="middle">0.1</text><line x1="477.61" y1="528.80" x2="480.43" y2="525.83" stroke="#303030" stroke-width="1"/><text x="483.60" y="525.00" font-size="7" fill="#1a1a1a" text-anchor="middle">50</text><line x1="482.53" y1="534.92" x2="486.04" y2="532.79" stroke="#303030" stroke-width="1"/><text x="490.40" y="531.10" font-size="7" fill="#1a1a1a" text-anchor="middle">20</text><line x1="485.67" y1="542.12" x2="489.61" y2="540.99" stroke="#303030" stroke-width="1"/><text x="494.20" y="540.80" font-size="7" fill="#1a1a1a" text-anchor="middle">10</text><line x1="486.80" y1="549.89" x2="490.90" y2="549.85" stroke="#303030" stroke-width="1"/><text x="496.40" y="550.90" font-size="7" fill="#1a1a1a" text-anchor="middle">5</text><line x1="485.83" y1="557.69" x2="489.80" y2="558.73" stroke="#303030" stroke-width="1"/><text x="495.60" y="561.90" font-size="7" fill="#1a1a1a" text-anchor="middle">2</text><line x1="482.85" y1="564.95" x2="486.40" y2="567.00" stroke="#303030" stroke-width="1"/><text x="493.20" y="573.20" font-size="7" fill="#1a1a1a" text-anchor="middle">1</text><line x1="478.05" y1="571.17" x2="480.93" y2="574.08" stroke="#303030" stroke-width="1"/><text x="486.00" y="581.60" font-size="7" fill="#1a1a1a" text-anchor="middle">0.5</text>
<text x="425.2" y="589.6" font-size="9.2" fill="#333" text-anchor="middle">ms</text>
<text x="489.6" y="589.8000000000001" font-size="9.2" fill="#333" text-anchor="middle">µs</text>
<rect x="440.3" y="581.4000000000001" width="35" height="13" fill="#e8e8e8"/>
<rect x="440.3" y="581.4000000000001" width="34" height="12" fill="#000"/>
<rect x="441.3" y="582.4000000000001" width="33" height="11" fill="#ffffff"/>
<text x="442.1" y="589.7" font-size="9.2" fill="#3848d0">0.1m</text>
<circle cx="457.3" cy="550.2" r="30.3" fill="url(#rim)"/>
<circle cx="456.90000000000003" cy="549.8000000000001" r="29.3" fill="url(#knob)"/>
<circle cx="457.3" cy="550.2" r="29.8" fill="none" stroke="#505050" stroke-width="0.7" opacity="0.8"/>
<circle cx="457.3" cy="550.2" r="16.3" fill="url(#ring)"/>
<circle cx="457.1" cy="550.0" r="13.6" fill="url(#cap)"/>
<polygon points="469.50,525.20 460.00,530.10 471.00,534.90" fill="#e07820"/><polygon points="466.90,554.30 461.40,559.00 468.20,561.00" fill="#e07820"/>
<text x="456" y="425" font-size="9" fill="#1c1c1c" text-anchor="middle" stroke="#1c1c1c" stroke-width="0.12">Source</text>
<path d="M423.5,434 L431.4,428.4 L431.4,433.8" fill="none" stroke="#e07820" stroke-width="1.3"/>
<text x="442.4" y="433.8" font-size="8.2" fill="#ffff00" text-anchor="middle" font-weight="bold">A</text>
<text x="457.2" y="433.8" font-size="8.2" fill="#1a98e8" text-anchor="middle" font-weight="bold">B</text>
<text x="471.5" y="433.8" font-size="8.2" fill="#e0208a" text-anchor="middle" font-weight="bold">C</text>
<text x="486" y="433.8" font-size="8.2" fill="#10a040" text-anchor="middle" font-weight="bold">D</text>
<rect x="417" y="437" width="80" height="1" fill="#f4f4f4"/>
<rect x="417" y="437" width="1" height="15" fill="#f4f4f4"/>
<rect x="418" y="438" width="79" height="14" fill="#000"/>
<rect x="419" y="439" width="77" height="12" fill="#b2b2b2"/>
<rect x="419" y="450" width="77" height="1" fill="#f0f0f0"/>
<rect x="495" y="439" width="1" height="12" fill="#f0f0f0"/>
<rect x="423" y="443" width="67" height="2" fill="#000"/>
<rect x="423" y="445" width="67" height="1" fill="#f0f0f0"/>
<rect x="419" y="439" width="15" height="11" fill="#505050"/>
<rect x="419" y="439" width="14" height="10" fill="#f4f4f4"/>
<rect x="420" y="440" width="13" height="9" fill="#d2d2d2"/>
<rect x="421" y="441" width="1" height="7" fill="#505050"/>
<rect x="424" y="441" width="1" height="7" fill="#505050"/>
<rect x="427" y="441" width="1" height="7" fill="#505050"/>
<rect x="430" y="441" width="1" height="7" fill="#505050"/>
<text x="456" y="462.7" font-size="9" fill="#1c1c1c" text-anchor="middle" stroke="#1c1c1c" stroke-width="0.12">Position</text>
<rect x="417" y="465" width="81" height="1" fill="#f4f4f4"/>
<rect x="417" y="465" width="1" height="40" fill="#f4f4f4"/>
<rect x="418" y="466" width="80" height="39" fill="#000"/>
<rect x="419" y="467" width="78" height="37" fill="#b2b2b2"/>
<rect x="419" y="503" width="78" height="1" fill="#f0f0f0"/>
<rect x="496" y="467" width="1" height="37" fill="#f0f0f0"/>
<rect x="420" y="472" width="76" height="1" fill="#f0f0f0"/>
<rect x="420" y="473" width="76" height="24" fill="url(#cylh)"/>
<rect x="420" y="497" width="76" height="1" fill="#000"/>
<rect x="420.6" y="473" width="1" height="3" fill="#585858"/><rect x="420.6" y="494" width="1" height="3" fill="#585858"/><rect x="424.6" y="473" width="1" height="3" fill="#585858"/><rect x="424.6" y="494" width="1" height="3" fill="#585858"/><rect x="428.6" y="473" width="1" height="3" fill="#585858"/><rect x="428.6" y="494" width="1" height="3" fill="#585858"/><rect x="432.6" y="473" width="1" height="3" fill="#585858"/><rect x="432.6" y="494" width="1" height="3" fill="#585858"/><rect x="436.6" y="473" width="1" height="5" fill="#585858"/><rect x="436.6" y="492" width="1" height="5" fill="#585858"/><rect x="440.6" y="473" width="1" height="3" fill="#585858"/><rect x="440.6" y="494" width="1" height="3" fill="#585858"/><rect x="444.6" y="473" width="1" height="3" fill="#585858"/><rect x="444.6" y="494" width="1" height="3" fill="#585858"/><rect x="448.6" y="473" width="1" height="3" fill="#585858"/><rect x="448.6" y="494" width="1" height="3" fill="#585858"/><rect x="452.6" y="473" width="1" height="3" fill="#585858"/><rect x="452.6" y="494" width="1" height="3" fill="#585858"/><rect x="456.6" y="473" width="1" height="5" fill="#585858"/><rect x="456.6" y="492" width="1" height="5" fill="#585858"/><rect x="460.6" y="473" width="1" height="3" fill="#585858"/><rect x="460.6" y="494" width="1" height="3" fill="#585858"/><rect x="464.6" y="473" width="1" height="3" fill="#585858"/><rect x="464.6" y="494" width="1" height="3" fill="#585858"/><rect x="468.6" y="473" width="1" height="3" fill="#585858"/><rect x="468.6" y="494" width="1" height="3" fill="#585858"/><rect x="472.6" y="473" width="1" height="3" fill="#585858"/><rect x="472.6" y="494" width="1" height="3" fill="#585858"/><rect x="476.6" y="473" width="1" height="5" fill="#585858"/><rect x="476.6" y="492" width="1" height="5" fill="#585858"/><rect x="480.6" y="473" width="1" height="3" fill="#585858"/><rect x="480.6" y="494" width="1" height="3" fill="#585858"/><rect x="484.6" y="473" width="1" height="3" fill="#585858"/><rect x="484.6" y="494" width="1" height="3" fill="#585858"/><rect x="488.6" y="473" width="1" height="3" fill="#585858"/><rect x="488.6" y="494" width="1" height="3" fill="#585858"/><rect x="492.6" y="473" width="1" height="3" fill="#585858"/><rect x="492.6" y="494" width="1" height="3" fill="#585858"/>
<g text-anchor="middle" font-size="9.6"><text x="435.9" y="487.8" fill="#c07020" opacity="0.7">210</text><text x="436.59999999999997" y="487.8" fill="#182038">210</text></g>
<g text-anchor="middle" font-size="9.6"><text x="456.0" y="487.8" fill="#c07020" opacity="0.7">200</text><text x="456.7" y="487.8" fill="#182038">200</text></g>
<g text-anchor="middle" font-size="9.6"><text x="475.9" y="487.8" fill="#c07020" opacity="0.7">190</text><text x="476.59999999999997" y="487.8" fill="#182038">190</text></g>
<path d="M451.8,467 L461.2,467 L456.5,472 Z" fill="#ff0000"/><path d="M452,503 L461,503 L456.5,498 Z" fill="#ff0000"/>
</svg></body></html>
